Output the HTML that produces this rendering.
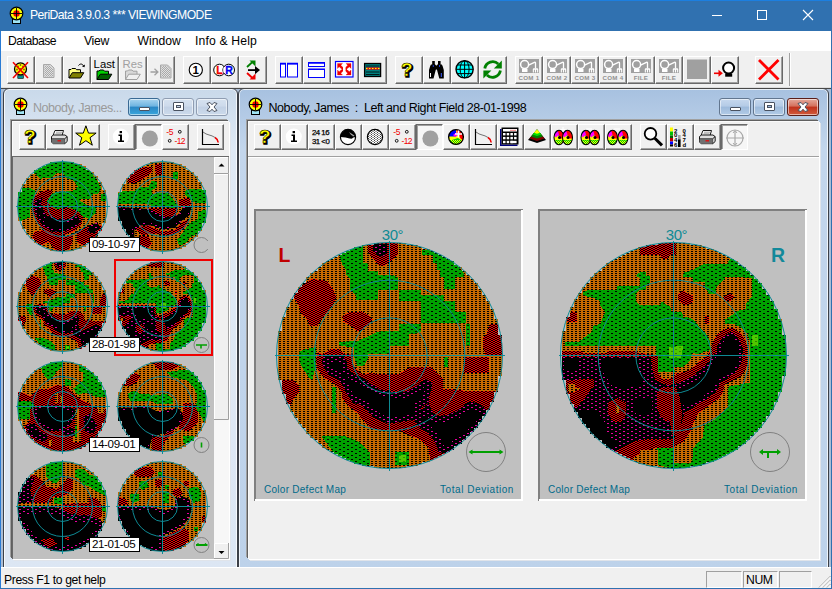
<!DOCTYPE html><html><head><meta charset="utf-8"><title>PeriData</title><style>
*{box-sizing:border-box;margin:0;padding:0}
html,body{width:832px;height:589px;overflow:hidden;background:#f0f0f0}
body{font-family:"Liberation Sans",sans-serif;font-size:12px;color:#000;position:relative}
.abs{position:absolute}
#title{left:0;top:0;width:832px;height:31px;background:#3071b0;border-top:1px solid #1c7fe0}
#title .txt{left:30px;top:7px;color:#fff;font-size:12.2px;white-space:nowrap;letter-spacing:-0.53px}
#menu{left:1px;top:31px;width:830px;height:20px;background:#fff}
#menu span{position:absolute;top:3px;font-size:12.2px;white-space:nowrap}
#tb{left:1px;top:51px;width:830px;height:36px;background:#f0f0f0}
#tbline1{left:1px;top:86px;width:830px;height:2px;background:linear-gradient(#fafafa,#d4d4d4)}
#tbline2{left:1px;top:88px;width:830px;height:1px;background:#484848}
#mdi{left:1px;top:89px;width:830px;height:478px;background:#abbdd4;overflow:hidden}
#status{left:1px;top:567px;width:830px;height:21px;background:#f0f0f0;border-top:1px solid #fff}
#bl{left:0;top:31px;width:1px;height:558px;background:#2a7bd4}
#br{left:831px;top:31px;width:1px;height:558px;background:#3071b0}
#bb{left:0;top:588px;width:832px;height:1px;background:#3071b0}
.btn{position:absolute;background:#f0f0f0;border-top:1px solid #fff;border-left:1px solid #fff;border-right:1px solid #696969;border-bottom:1px solid #696969;box-shadow:inset -1px -1px 0 #a0a0a0}
.btn svg{position:absolute;left:-1px;top:-1px;overflow:visible}
.btn.dn{border-top:1px solid #696969;border-left:1px solid #696969;border-right:1px solid #fff;border-bottom:1px solid #fff;background:#f6f6f6;box-shadow:inset 1px 1px 0 #a0a0a0}
.win{position:absolute;border:1px solid #3c4048;border-radius:6px 6px 0 0;overflow:hidden;box-shadow:inset 0 0 0 1px rgba(255,255,255,.75)}
.win .cap{position:absolute;left:0;top:0;right:0;height:31px}
.sp{position:absolute;height:17px;top:3px;border-top:1px solid #a0a0a0;border-left:1px solid #a0a0a0;border-right:1px solid #fff;border-bottom:1px solid #fff}
</style></head><body><svg width="0" height="0" style="position:absolute"><defs>
<pattern id="pO" patternTransform="translate(1,1)" width="4" height="2" patternUnits="userSpaceOnUse"><rect width="4" height="2" fill="#c56a00"/><rect x="2" y="0" width="2" height="1" fill="#000"/></pattern>
<pattern id="pG" patternTransform="translate(1,1)" width="8" height="4" patternUnits="userSpaceOnUse"><rect width="8" height="4" fill="#00a000"/><rect x="2" y="0" width="2" height="1" fill="#000"/><rect x="6" y="2" width="2" height="1" fill="#000"/></pattern>
<pattern id="pR" patternTransform="translate(1,1)" width="4" height="2" patternUnits="userSpaceOnUse"><rect width="4" height="2" fill="#000"/><rect x="0" y="1" width="2" height="1" fill="#f00000"/><rect x="2" y="0" width="2" height="1" fill="#f00000"/></pattern>
<pattern id="pK" patternTransform="translate(1,1)" width="8" height="4" patternUnits="userSpaceOnUse"><rect width="8" height="4" fill="#000"/><rect x="2" y="0" width="2" height="1" fill="#e8009c"/><rect x="6" y="2" width="2" height="1" fill="#e8009c"/></pattern>
<pattern id="pY" patternTransform="translate(1,1)" width="8" height="4" patternUnits="userSpaceOnUse"><rect width="8" height="4" fill="#50c800"/><rect x="2" y="0" width="2" height="1" fill="#308000"/><rect x="6" y="2" width="2" height="1" fill="#308000"/></pattern>
<pattern id="pDoc" width="2" height="2" patternUnits="userSpaceOnUse"><rect width="2" height="2" fill="#e0e0e0"/><rect width="1" height="1" fill="#a8a8a8"/><rect x="1" y="1" width="1" height="1" fill="#a8a8a8"/></pattern><pattern id="pDot" width="2" height="2" patternUnits="userSpaceOnUse"><rect width="1" height="1" fill="#ffff00"/><rect x="1" y="1" width="1" height="1" fill="#ffff00"/></pattern><pattern id="pDit" width="3" height="2" patternUnits="userSpaceOnUse"><rect width="3" height="2" fill="#fff"/><rect width="1" height="1" fill="#404040"/><rect x="1.5" y="1" width="1" height="1" fill="#404040"/></pattern></defs></svg><div id="title" class="abs"><svg class="abs" style="left:8px;top:5px" width="18" height="20" viewBox="0 0 18 20"><rect x="4.500" y="13" width="8" height="4.500" fill="#a0e4f4" stroke="#000" stroke-width="1"/><circle cx="8.500" cy="7.500" r="6.300" fill="#ffff00" stroke="#000" stroke-width="1.200"/><circle cx="8.500" cy="7.500" r="3.200" fill="#f00000"/><path d="M8.500 2v11M3 7.500h11" stroke="#000" stroke-width="0.900"/></svg><div class="abs txt">PeriData 3.9.0.3 *** VIEWINGMODE</div><svg class="abs" style="left:694px;top:-1px" width="138" height="30"><path d="M18 15.500h10" stroke="#fff" stroke-width="1"/><rect x="63.500" y="10.500" width="9" height="9" fill="none" stroke="#fff"/><path d="M109 10l10 10M119 10l-10 10" stroke="#fff" stroke-width="1.100"/></svg></div><div id="menu" class="abs"><span style="left:7px;letter-spacing:-0.52px">Database</span><span style="left:83px;letter-spacing:-0.3px">View</span><span style="left:136.5px">Window</span><span style="left:194px;letter-spacing:0.15px">Info &amp; Help</span></div><div id="tb" class="abs"><div class="btn" style="left:6px;top:5px;width:28px;height:28px"><svg width="28" height="28"><g transform="translate(1,1)"><circle cx="12.5" cy="11.9" r="6" fill="#ffff00" stroke="#000" stroke-width="1.3"/><g fill="#806000"><circle cx="10" cy="9.5" r="0.9"/><circle cx="15" cy="9.5" r="0.9"/><circle cx="12.5" cy="8" r="0.9"/><circle cx="9" cy="12.5" r="0.9"/><circle cx="16" cy="12.5" r="0.9"/><circle cx="12.5" cy="12" r="0.9"/><circle cx="10.5" cy="15.3" r="0.9"/><circle cx="14.5" cy="15.3" r="0.9"/></g><rect x="9.8" y="18.6" width="5.6" height="2.8" fill="#009090" stroke="#000" stroke-width="0.6"/><path d="M5 5.3L20 21M20 5.3L5 21" stroke="#f00000" stroke-width="1.6"/></g></svg></div><div class="btn" style="left:34px;top:5px;width:28px;height:28px"><svg width="28" height="28"><g transform="translate(1,1)"><path d="M7.5 7.5h7l3.5 3.5v9.5h-10.5z" fill="#d8d8d8" stroke="#a8a8a8" stroke-width="1"/><path d="M8.5 8.5h5.5l3 3v8h-8.5z" fill="url(#pDoc)"/></g></svg></div><div class="btn" style="left:62px;top:5px;width:28px;height:28px"><svg width="28" height="28"><g transform="translate(1,1)"><path d="M5 21.0v-8.5h2l1-1h3.5l1 1.2h4v3" fill="#ffff80" stroke="#000" stroke-width="1"/><path d="M5 21.0l3.3-5.3h11.5l-3.3 5.3z" fill="#808000" stroke="#000" stroke-width="1"/><path d="M14.5 8.5c1.5-2 4-2 5 .5" fill="none" stroke="#000" stroke-width="1"/><path d="M18 9.5l2.5.8.5-2.8z" fill="#000"/></g></svg></div><div class="btn" style="left:90px;top:5px;width:28px;height:28px"><svg width="28" height="28"><g transform="translate(1,1)"><text x="1.6" y="10.8" font-size="11.3" font-family="Liberation Sans" fill="#000">Last</text><path d="M5 22.5v-8.5h2l1-1h3.5l1 1.2h4v3" fill="#00d000" stroke="#000" stroke-width="1"/><path d="M5 22.5l3.3-5.3h11.5l-3.3 5.3z" fill="#006000" stroke="#000" stroke-width="1"/></g></svg></div><div class="btn" style="left:118px;top:5px;width:28px;height:28px"><svg width="28" height="28"><g transform="translate(1,1)"><text x="2.5" y="10.8" font-size="11.3" font-family="Liberation Sans" fill="#a0a0a0">Res</text><path d="M5.5 22.5v-8.5h2l1-1h3.5l1 1.2h4v3" fill="#d8d8d8" stroke="#a0a0a0" stroke-width="1"/><path d="M5.5 22.5l3.3-5.3h11.5l-3.3 5.3z" fill="#f0f0f0" stroke="#a0a0a0" stroke-width="1"/></g></svg></div><div class="btn" style="left:146px;top:5px;width:28px;height:28px"><svg width="28" height="28"><g transform="translate(1,1)"><path d="M2.5 15h7M6.5 11.8l3.4 3.2-3.4 3.2" fill="none" stroke="#a0a0a0" stroke-width="1.3"/><path d="M12.5 8h7l3.5 3.5v9.5h-10.5z" fill="#d8d8d8" stroke="#a8a8a8" stroke-width="1"/><path d="M13.5 9h5.5l3 3v8h-8.5z" fill="url(#pDoc)"/></g></svg></div><div class="btn" style="left:182px;top:5px;width:28px;height:28px"><svg width="28" height="28"><g transform="translate(1,1)"><circle cx="11.8" cy="12.9" r="6.6" fill="#fff" stroke="#000" stroke-width="1.1"/><text x="11.8" y="17" font-size="11.5" font-weight="bold" text-anchor="middle" font-family="Liberation Sans" fill="#000">1</text></g></svg></div><div class="btn" style="left:210px;top:5px;width:28px;height:28px"><svg width="28" height="28"><g transform="translate(1,1)"><circle cx="7.5" cy="13" r="5.8" fill="#fff" stroke="#000" stroke-width="1"/><circle cx="16.7" cy="13" r="5.8" fill="#fff" stroke="#000" stroke-width="1"/><path d="M12.100 10.500v5" stroke="#fff" stroke-width="1.5"/><text x="7.4" y="16.8" font-size="10.5" font-weight="bold" text-anchor="middle" font-family="Liberation Sans" fill="#f00000" stroke="#f00000" stroke-width="0.3">L</text><text x="17" y="16.8" stroke="#0000f0" stroke-width="0.3" font-size="10.5" font-weight="bold" text-anchor="middle" font-family="Liberation Sans" fill="#0000f0">R</text></g></svg></div><div class="btn" style="left:238px;top:5px;width:28px;height:28px"><svg width="28" height="28"><g transform="translate(1,1)"><path d="M7 10l6-5.5" stroke="#008000" stroke-width="1.8"/><path d="M9.5 3.5h6v6z" fill="#008000"/><path d="M8 13.1h8" stroke="#000" stroke-width="1.8"/><path d="M15 9l5 4.1-5 4.1z" fill="#000"/><path d="M7 16l6 5.5" stroke="#f00000" stroke-width="1.8"/><path d="M9.5 22.5h6v-6z" fill="#f00000"/></g></svg></div><div class="btn" style="left:274px;top:5px;width:28px;height:28px"><svg width="28" height="28"><g transform="translate(1,1)"><rect x="4.5" y="7" width="5" height="13" fill="#fff" stroke="#0000ff"/><rect x="11.5" y="7" width="10" height="13" fill="#fff" stroke="#0000ff"/><path d="M4 6.5h6M11 6.5h11" stroke="#0000ff" stroke-width="1.4"/></g></svg></div><div class="btn" style="left:302px;top:5px;width:28px;height:28px"><svg width="28" height="28"><g transform="translate(1,1)"><rect x="4.5" y="6" width="16" height="3.5" fill="#fff" stroke="#0000ff"/><rect x="4.5" y="12.5" width="16" height="8" fill="#fff" stroke="#0000ff"/><path d="M4 5.8h17M4 12.2h17" stroke="#0000ff" stroke-width="1.4"/></g></svg></div><div class="btn" style="left:330px;top:5px;width:28px;height:28px"><svg width="28" height="28"><g transform="translate(1,1)"><rect x="3.500" y="4.500" width="17.500" height="15.500" fill="#fff" stroke="#0000ff" stroke-width="1.200"/><g fill="#f00000" stroke="#f00000" stroke-width="0.3"><path d="M5.500 6.500h5l-1.700 1.700 3 3-1.600 1.600-3-3-1.700 1.700z"/><path d="M19 6.500h-5l1.700 1.700-3 3 1.600 1.600 3-3 1.700 1.700z"/><path d="M5.500 18h5l-1.700-1.700 3-3-1.600-1.600-3 3-1.700-1.700z"/><path d="M19 18h-5l1.700-1.700-3-3 1.600-1.600 3 3 1.700-1.700z"/></g><path d="M6 12.250h3.500M18.500 12.250h-3.500" stroke="#fff" stroke-width="1.2"/><rect x="11" y="5.5" width="2.500" height="13.500" fill="#fff"/></g></svg></div><div class="btn" style="left:358px;top:5px;width:28px;height:28px"><svg width="28" height="28"><g transform="translate(1,1)"><rect x="4.600" y="6.500" width="16" height="13" fill="#008080" stroke="#000" stroke-width="1.300"/><path d="M6 15h13.500M6 17.500h13.500M6 9h13.500" stroke="#000" stroke-width="0.800"/><path d="M6 11.500h13.500" stroke="#f00000" stroke-width="2.200"/><path d="M6 11.500h13.500" stroke="#ffff00" stroke-width="1.200" stroke-dasharray="1.500 1.500"/></g></svg></div><div class="btn" style="left:394px;top:5px;width:28px;height:28px"><svg width="28" height="28"><g transform="translate(1,1)"><g transform="translate(0.5,0.5)"><text x="5.5" y="19.5" font-size="19" font-weight="bold" font-family="Liberation Sans" fill="#000" stroke="#000" stroke-width="1.6">?</text></g><text x="5" y="19" font-size="19" font-weight="bold" font-family="Liberation Sans" fill="#ffff00" stroke="#000" stroke-width="0.5">?</text></g></svg></div><div class="btn" style="left:422px;top:5px;width:28px;height:28px"><svg width="28" height="28"><g transform="translate(1,1)"><path d="M8.200 4h2.600v3l1.200 1.500v3.500l-2.500 9.500h-4.500v-8.500l1.200-4 .8-1.500h1.200z" fill="#000"/><path d="M16.600 4h-2.600v3l-1.200 1.500v3.500l2.500 9.500h4.500v-8.500l-1.200-4-.8-1.500h-1.200z" fill="#000"/><rect x="11" y="8.500" width="3" height="4" fill="#000"/><rect x="8.800" y="8" width="1" height="2" fill="#2040d0"/><rect x="15" y="8" width="1" height="2" fill="#2040d0"/><rect x="6" y="16" width="1" height="4" fill="#fff"/><rect x="16.800" y="16" width="1" height="4" fill="#4060ff"/></g></svg></div><div class="btn" style="left:450px;top:5px;width:28px;height:28px"><svg width="28" height="28"><g transform="translate(1,1)"><circle cx="12.600" cy="12.300" r="8.600" fill="#00ffff" stroke="#000" stroke-width="1.400"/><path d="M4 12.300h17.200M5.500 8h14.200M5.500 16.600h14.200M12.600 3.700v17.200" stroke="#000" stroke-width="1"/><ellipse cx="12.600" cy="12.300" rx="4.500" ry="8.600" fill="none" stroke="#000" stroke-width="1"/></g></svg></div><div class="btn" style="left:478px;top:5px;width:28px;height:28px"><svg width="28" height="28"><g transform="translate(1,1)"><path d="M4.800 11.500a8 8 0 0 1 13.500-4.500" fill="none" stroke="#008000" stroke-width="2.800"/><path d="M21.800 3.500v8h-8z" fill="#008000"/><path d="M20.400 13.500a8 8 0 0 1-13.500 4.500" fill="none" stroke="#008000" stroke-width="2.800"/><path d="M3.400 21.500v-8h8z" fill="#008000"/></g></svg></div><div class="btn" style="left:514px;top:5px;width:28px;height:28px"><svg width="28" height="28"><g transform="translate(1,1)"><rect x="3" y="2" width="20" height="14" fill="#a0a0a0"/><circle cx="8.6" cy="7.6" r="4" fill="#a0a0a0" stroke="#fff" stroke-width="1.5"/><path d="M6 12h5.5v3h-5.5z" fill="#fff"/><path d="M12.6 8.2L18.4 5.3q1.1-.4 1.100.800V11.500" fill="none" stroke="#fff" stroke-width="1.300"/><path d="M16.800 15.600v-3.300q0-1 1-1h3.400q1 0 1 1v3.300h-1.100v-2.800h-1v2.800h-1.200v-2.800h-1v2.800z" fill="#fff"/><text x="13" y="23.3" font-size="6.2" font-weight="bold" text-anchor="middle" font-family="Liberation Sans" fill="#909090" letter-spacing="0.3">COM 1</text></g></svg></div><div class="btn" style="left:542px;top:5px;width:28px;height:28px"><svg width="28" height="28"><g transform="translate(1,1)"><rect x="3" y="2" width="20" height="14" fill="#a0a0a0"/><circle cx="8.6" cy="7.6" r="4" fill="#a0a0a0" stroke="#fff" stroke-width="1.5"/><path d="M6 12h5.5v3h-5.5z" fill="#fff"/><path d="M12.6 8.2L18.4 5.3q1.1-.4 1.100.800V11.500" fill="none" stroke="#fff" stroke-width="1.300"/><path d="M16.800 15.600v-3.300q0-1 1-1h3.400q1 0 1 1v3.300h-1.100v-2.800h-1v2.800h-1.200v-2.800h-1v2.800z" fill="#fff"/><text x="13" y="23.3" font-size="6.2" font-weight="bold" text-anchor="middle" font-family="Liberation Sans" fill="#909090" letter-spacing="0.3">COM 2</text></g></svg></div><div class="btn" style="left:570px;top:5px;width:28px;height:28px"><svg width="28" height="28"><g transform="translate(1,1)"><rect x="3" y="2" width="20" height="14" fill="#a0a0a0"/><circle cx="8.6" cy="7.6" r="4" fill="#a0a0a0" stroke="#fff" stroke-width="1.5"/><path d="M6 12h5.5v3h-5.5z" fill="#fff"/><path d="M12.6 8.2L18.4 5.3q1.1-.4 1.100.800V11.500" fill="none" stroke="#fff" stroke-width="1.300"/><path d="M16.800 15.600v-3.300q0-1 1-1h3.400q1 0 1 1v3.300h-1.100v-2.800h-1v2.800h-1.200v-2.800h-1v2.800z" fill="#fff"/><text x="13" y="23.3" font-size="6.2" font-weight="bold" text-anchor="middle" font-family="Liberation Sans" fill="#909090" letter-spacing="0.3">COM 3</text></g></svg></div><div class="btn" style="left:598px;top:5px;width:28px;height:28px"><svg width="28" height="28"><g transform="translate(1,1)"><rect x="3" y="2" width="20" height="14" fill="#a0a0a0"/><circle cx="8.6" cy="7.6" r="4" fill="#a0a0a0" stroke="#fff" stroke-width="1.5"/><path d="M6 12h5.5v3h-5.5z" fill="#fff"/><path d="M12.6 8.2L18.4 5.3q1.1-.4 1.100.800V11.500" fill="none" stroke="#fff" stroke-width="1.300"/><path d="M16.800 15.600v-3.300q0-1 1-1h3.400q1 0 1 1v3.300h-1.100v-2.800h-1v2.800h-1.200v-2.800h-1v2.800z" fill="#fff"/><text x="13" y="23.3" font-size="6.2" font-weight="bold" text-anchor="middle" font-family="Liberation Sans" fill="#909090" letter-spacing="0.3">COM 4</text></g></svg></div><div class="btn" style="left:626px;top:5px;width:28px;height:28px"><svg width="28" height="28"><g transform="translate(1,1)"><rect x="3" y="2" width="20" height="14" fill="#a0a0a0"/><circle cx="8.6" cy="7.6" r="4" fill="#a0a0a0" stroke="#fff" stroke-width="1.5"/><path d="M6 12h5.5v3h-5.5z" fill="#fff"/><path d="M12.6 8.2L18.4 5.3q1.1-.4 1.100.800V11.500" fill="none" stroke="#fff" stroke-width="1.300"/><path d="M16.800 15.600v-3.300q0-1 1-1h3.400q1 0 1 1v3.300h-1.100v-2.800h-1v2.800h-1.200v-2.800h-1v2.800z" fill="#fff"/><text x="13" y="23.3" font-size="6.2" font-weight="bold" text-anchor="middle" font-family="Liberation Sans" fill="#909090" letter-spacing="0.3">FILE</text></g></svg></div><div class="btn" style="left:654px;top:5px;width:28px;height:28px"><svg width="28" height="28"><g transform="translate(1,1)"><rect x="3" y="2" width="20" height="14" fill="#a0a0a0"/><circle cx="8.6" cy="7.6" r="4" fill="#a0a0a0" stroke="#fff" stroke-width="1.5"/><path d="M6 12h5.5v3h-5.5z" fill="#fff"/><path d="M12.6 8.2L18.4 5.3q1.1-.4 1.100.800V11.500" fill="none" stroke="#fff" stroke-width="1.300"/><path d="M16.800 15.600v-3.300q0-1 1-1h3.400q1 0 1 1v3.300h-1.100v-2.800h-1v2.800h-1.200v-2.800h-1v2.800z" fill="#fff"/><text x="13" y="23.3" font-size="6.2" font-weight="bold" text-anchor="middle" font-family="Liberation Sans" fill="#909090" letter-spacing="0.3">FILE</text></g></svg></div><div class="btn" style="left:682px;top:5px;width:28px;height:28px"><svg width="28" height="28"><g transform="translate(1,1)"><rect x="3" y="2.500" width="20" height="19.500" fill="#a0a0a0"/></g></svg></div><div class="btn" style="left:710px;top:5px;width:28px;height:28px"><svg width="28" height="28"><g transform="translate(1,1)"><circle cx="16.600" cy="11" r="5.500" fill="#fff" stroke="#000" stroke-width="2"/><rect x="13.200" y="16.500" width="7" height="3.200" fill="#000"/><path d="M2 16.300h6" stroke="#f00000" stroke-width="1.600"/><path d="M6.500 12.800l4.300 3.500-4.300 3.500z" fill="#f00000"/></g></svg></div><div class="btn" style="left:754px;top:5px;width:28px;height:28px"><svg width="28" height="28"><g transform="translate(1,1)"><path d="M3 3l19.500 19.500M22.500 3L3 22.500" stroke="#ff0000" stroke-width="2.800"/></g></svg></div><div class="abs" style="left:788px;top:2px;width:1px;height:34px;background:#a0a0a0"></div><div class="abs" style="left:789px;top:2px;width:1px;height:34px;background:#fff"></div></div><div id="tbline1" class="abs"></div><div id="tbline2" class="abs"></div><div id="mdi" class="abs"><div class="win" style="left:2px;top:-1px;width:235px;height:490px;background:linear-gradient(#c9d9ea,#dfe9f5 60px,#dce6f3)"><div class="cap"><svg class="abs" style="left:8px;top:8px" width="18" height="20" viewBox="0 0 18 20"><rect x="4.500" y="13" width="8" height="4.500" fill="#a0e4f4" stroke="#000" stroke-width="1"/><circle cx="8.500" cy="7.500" r="6.300" fill="#ffff00" stroke="#000" stroke-width="1.200"/><circle cx="8.500" cy="7.500" r="3.200" fill="#f00000"/><path d="M8.500 2v11M3 7.500h11" stroke="#000" stroke-width="0.900"/></svg><div class="abs" style="left:29px;top:12px;color:#9a9a9a;font-size:12.5px;white-space:nowrap;letter-spacing:-0.48px">Nobody, James...</div><div class="abs" style="left:124px;top:9px;width:32px;height:18px;border:1px solid #3a6a94;border-radius:3px;background:linear-gradient(#a8d4f0,#6eb4e0 45%,#2a86c4 50%,#3aa6dc);box-shadow:inset 0 0 0 1px rgba(255,255,255,.55)"><div class="abs" style="left:10px;top:8px;width:11px;height:4px;background:#fff;border:1px solid #4a5260;border-radius:1px"></div></div><div class="abs" style="left:158px;top:9px;width:32px;height:18px;border:1px solid #8f9db2;border-radius:3px;background:linear-gradient(#d6e2f0,#cddaeb 45%,#c2d1e5 50%,#ccdaeb);box-shadow:inset 0 0 0 1px rgba(255,255,255,.55)"><div class="abs" style="left:10px;top:3px;width:11px;height:9px;border:1px solid #4a5260;border-radius:1px;background:#fff"><div class="abs" style="left:2px;top:2px;width:5px;height:3px;border:1px solid #4a5260;background:linear-gradient(#d6e2f0,#cddaeb 45%,#c2d1e5 50%,#ccdaeb)"></div></div></div><div class="abs" style="left:192px;top:9px;width:32px;height:18px;border:1px solid #8f9db2;border-radius:3px;background:linear-gradient(#d6e2f0,#cddaeb 45%,#c2d1e5 50%,#ccdaeb);box-shadow:inset 0 0 0 1px rgba(255,255,255,.55)"><svg class="abs" style="left:8px;top:2px" width="14" height="12"><path d="M2 2.500l3-1 2 2.300 2-2.300 3 1-3 3.500 3 3.500-3 1-2-2.300-2 2.300-3-1 3-3.500z" fill="#fff" stroke="#4a5260" stroke-width="1"/></svg></div></div><div class="abs" style="left:8px;top:32px;width:217px;height:438px;background:#f0f0f0;box-shadow:-1px -1px 0 0 #606060,-2px -2px 0 0 #a0a0a0,1px 1px 0 0 #fff,2px 2px 0 0 #e0e4ea,inset 1px 1px 0 #fafafa"><div class="btn" style="left:7px;top:3px;width:27px;height:26px"><svg width="27" height="26"><g transform="translate(0.5,0.5)"><text x="5.5" y="19.5" font-size="19" font-weight="bold" font-family="Liberation Sans" fill="#000" stroke="#000" stroke-width="1.6">?</text></g><text x="5" y="19" font-size="19" font-weight="bold" font-family="Liberation Sans" fill="#ffff00" stroke="#000" stroke-width="0.5">?</text></svg></div><div class="btn" style="left:34px;top:3px;width:27px;height:26px"><svg width="27" height="26"><path d="M9 6.5h8.5l-1.5 5h-9z" fill="#fff" stroke="#000" stroke-width="0.9"/><path d="M10 8.2h6M9.5 9.8h6" stroke="#808080" stroke-width="0.7"/><path d="M5.5 12.5l2-1.5h11.5l2 1.5v5l-2.5 2.2h-11l-2-1.5z" fill="#e0e0e0" stroke="#000" stroke-width="0.9"/><path d="M5.5 15.2h13v4.5h-11l-2-1.5z" fill="#707070"/><path d="M5.5 14.8h13.2l2.3-2" fill="none" stroke="#000" stroke-width="0.8"/><rect x="11.5" y="16.2" width="3.5" height="1.2" fill="#f00000"/><path d="M18.7 15v4.5l2.3-2v-4.8z" fill="#e0e0e0" stroke="#000" stroke-width="0.6"/></svg></div><div class="btn" style="left:61px;top:3px;width:27px;height:26px"><svg width="27" height="26"><path d="M12.900 1.800l2.600 7.300h7.600l-6.100 4.600 2.300 7.500-6.400-4.500-6.400 4.500 2.300-7.500-6.100-4.600h7.600z" fill="#ffff00" stroke="#000" stroke-width="1"/></svg></div><div class="btn" style="left:96px;top:3px;width:27px;height:26px"><svg width="27" height="26"><circle cx="12.8" cy="12.6" r="8" fill="#fff"/><path d="M10.5 10.5h3.5v6h2v1.6h-6v-1.6h2v-4.4h-1.5z" fill="#000"/><rect x="11.6" y="7" width="2.4" height="2.2" fill="#000"/></svg></div><div class="btn dn" style="left:123px;top:3px;width:27px;height:26px"><svg width="27" height="26"><circle cx="14.9" cy="14.5" r="8" fill="#a0a0a0"/></svg></div><div class="btn" style="left:150px;top:3px;width:27px;height:26px"><svg width="27" height="26"><text x="4.3" y="11" font-size="8.5" font-family="Liberation Sans" fill="#f00000" letter-spacing="-0.4">-5</text><text x="12.6" y="20" font-size="8.5" font-family="Liberation Sans" fill="#f00000" letter-spacing="-0.7">-12</text><circle cx="17.8" cy="7.8" r="1.4" fill="none" stroke="#000" stroke-width="0.9"/><circle cx="7.7" cy="16.8" r="1.4" fill="none" stroke="#000" stroke-width="0.9"/></svg></div><div class="btn" style="left:185px;top:3px;width:27px;height:26px"><svg width="27" height="26"><path d="M5.5 5v15.5H22" fill="none" stroke="#000" stroke-width="1.2"/><path d="M6 8c4 3.500 8 2.500 12 5.500" fill="none" stroke="#505050" stroke-width="0.800"/><path d="M18 13.5c2 1.2 3 3 3.2 5" fill="none" stroke="#f00000" stroke-width="1.6"/></svg></div><svg class="abs" style="left:0;top:0" width="217" height="438" viewBox="12 121 217 438"><rect x="12" y="156" width="217" height="403" fill="#c0c0c0"/><path d="M12.5 559V156.5H229" fill="none" stroke="#696969" shape-rendering="crispEdges"/><clipPath id="c1"><rect x="18" y="192" width="4" height="29"/><rect x="22" y="184" width="4" height="45"/><rect x="26" y="178" width="4" height="57"/><rect x="30" y="174" width="4" height="65"/><rect x="34" y="170" width="4" height="73"/><rect x="38" y="168" width="4" height="77"/><rect x="42" y="166" width="4" height="81"/><rect x="46" y="164" width="4" height="85"/><rect x="50" y="162" width="4" height="89"/><rect x="54" y="162" width="4" height="89"/><rect x="58" y="162" width="4" height="89"/><rect x="62" y="162" width="4" height="89"/><rect x="66" y="162" width="4" height="89"/><rect x="70" y="162" width="4" height="89"/><rect x="74" y="164" width="4" height="85"/><rect x="78" y="164" width="4" height="85"/><rect x="82" y="166" width="4" height="81"/><rect x="86" y="170" width="4" height="73"/><rect x="90" y="172" width="4" height="69"/><rect x="94" y="176" width="4" height="61"/><rect x="98" y="182" width="4" height="49"/><rect x="102" y="190" width="4" height="33"/></clipPath><g clip-path="url(#c1)" shape-rendering="crispEdges"><rect x="15.899999999999999" y="159.9" width="93.2" height="93.2" fill="url(#pO)"/><polygon points="42.5,162.3 61.9,160.2 78.2,163.3 89.4,170.4 97.5,180.6 101.6,188.8 97.5,193.9 93.5,193.9 89.4,199 78.2,199 73.1,190.8 78.2,186.7 73.1,180.6 67,178.6 61.9,172.5 56.8,172.5 51.7,177.6 40.5,178.6 35.4,173.5 28.3,173.5 34.4,167.4" fill="url(#pG)" /><polygon points="16,187.8 30.3,187.8 35.4,190.8 34.4,202 30.3,209.1 30.3,217.3 20.1,221.4 14,205.1" fill="url(#pG)" /><polygon points="51.7,192.8 73.1,190.8 78.2,199 83.3,203 89.4,207.1 95.5,206.1 95.5,213.2 89.4,219.3 85.3,217.3 83.3,217.3 78.2,211.2 73.1,209.1 67,207.1 56.8,209.1 51.7,207.1 46.6,201" fill="url(#pG)" /><polygon points="100.6,193.9 108.8,193.9 108.8,201 100.6,201" fill="url(#pG)" /><polygon points="34.4,195.9 42.5,190.8 51.7,189.8 51.7,193.9 46.6,201 51.7,207.1 56.8,209.1 67,207.1 78.2,211.2 83.3,217.3 81.2,225.4 73.1,231.6 62.9,235.6 51.7,235.6 42.5,229.5 36.4,221.4 32.3,211.2 32.3,201" fill="url(#pR)" /><polygon points="34.4,231.6 46.6,229.5 56.8,235.6 69,235.6 77.2,231.6 89.4,225.4 97.5,223.4 103.7,227.5 93.5,241.7 83.3,245.8 73.1,239.7 69,249.9 56.8,251.9 48.6,241.7 40.5,245.8 32.3,237.7" fill="url(#pR)" /><polygon points="35.4,200 42.5,196.9 40.5,205.1 46.6,215.3 56.8,219.3 69,219.3 77.2,215.3 81.2,221.4 75.1,227.5 62.9,231.6 51.7,231.6 42.5,225.4 36.4,215.3 34.4,207.1" fill="#000" /><clipPath id="c1k1"><polygon points="35.4,200 42.5,196.9 40.5,205.1 46.6,215.3 56.8,219.3 69,219.3 77.2,215.3 81.2,221.4 75.1,227.5 62.9,231.6 51.7,231.6 42.5,225.4 36.4,215.3 34.4,207.1" fill="#000" /></clipPath><g clip-path="url(#c1k1)"><polygon points="35.4,200 42.5,196.9 40.5,205.1 46.6,215.3 56.8,219.3 69,219.3 77.2,215.3 81.2,221.4 75.1,227.5 62.9,231.6 51.7,231.6 42.5,225.4 36.4,215.3 34.4,207.1" fill="none" stroke="url(#pK)" stroke-width="6"/></g><polygon points="89.4,225.4 97.5,222.4 99.6,227.5 93.5,233.6 87.4,231.6" fill="#000" /><clipPath id="c1k2"><polygon points="89.4,225.4 97.5,222.4 99.6,227.5 93.5,233.6 87.4,231.6" fill="#000" /></clipPath><g clip-path="url(#c1k2)"><polygon points="89.4,225.4 97.5,222.4 99.6,227.5 93.5,233.6 87.4,231.6" fill="none" stroke="url(#pK)" stroke-width="6"/></g><polygon points="73.1,233.6 77.2,233.6 77.2,241.7 73.1,241.7" fill="url(#pO)" /></g><g fill="none" stroke="#0e8a94" stroke-width="1"><circle cx="62.5" cy="206.5" r="15.0"/><circle cx="62.5" cy="206.5" r="30.0"/><circle cx="62.5" cy="206.5" r="45.0"/><path d="M15.5 206.5H109.5M62.5 159.5V253.5" shape-rendering="crispEdges"/></g><clipPath id="c2"><rect x="118" y="192" width="4" height="29"/><rect x="122" y="184" width="4" height="45"/><rect x="126" y="178" width="4" height="57"/><rect x="130" y="174" width="4" height="65"/><rect x="134" y="170" width="4" height="73"/><rect x="138" y="168" width="4" height="77"/><rect x="142" y="166" width="4" height="81"/><rect x="146" y="164" width="4" height="85"/><rect x="150" y="162" width="4" height="89"/><rect x="154" y="162" width="4" height="89"/><rect x="158" y="162" width="4" height="89"/><rect x="162" y="162" width="4" height="89"/><rect x="166" y="162" width="4" height="89"/><rect x="170" y="162" width="4" height="89"/><rect x="174" y="164" width="4" height="85"/><rect x="178" y="164" width="4" height="85"/><rect x="182" y="166" width="4" height="81"/><rect x="186" y="170" width="4" height="73"/><rect x="190" y="172" width="4" height="69"/><rect x="194" y="176" width="4" height="61"/><rect x="198" y="182" width="4" height="49"/><rect x="202" y="190" width="4" height="33"/></clipPath><g clip-path="url(#c2)" shape-rendering="crispEdges"><rect x="115.9" y="159.9" width="93.2" height="93.2" fill="url(#pO)"/><polygon points="116,193.9 124.2,190.8 134.4,190.8 140.5,186.7 148.6,186.7 151.7,180.6 156.8,180.6 156.8,186.7 151.7,190.8 151.7,193.9 167,192.8 173.1,199 177.2,205.1 175.1,211.2 169,209.1 162.9,206.1 151.7,206.1 148.6,204.1 116,204.1" fill="url(#pG)" /><polygon points="173.1,171.5 178.2,171.5 178.2,178.6 173.1,178.6" fill="url(#pG)" /><polygon points="185.3,190.8 191.4,188.8 209.8,189.8 209.8,203 195.5,203 189.4,199 185.3,194.9" fill="url(#pG)" /><polygon points="197.5,211.2 209.8,209.1 207.7,223.4 197.5,233.6 189.4,237.7 185.3,243.8 179.2,245.8 177.2,239.7 183.3,231.6 189.4,223.4 197.5,219.3" fill="url(#pG)" /><polygon points="126.2,176.5 134.4,170.4 142.5,167.4 151.7,166.4 151.7,171.5 146.6,176.5 140.5,180.6 134.4,183.7 128.3,182.7" fill="url(#pR)" /><polygon points="154.8,164.3 161.9,163.3 161.9,174.5 156.8,175.5 154.8,170.4" fill="url(#pR)" /><polygon points="179.2,199 189.4,197.9 191.4,205.1 185.3,207.1 179.2,206.1" fill="url(#pR)" /><polygon points="134.4,227.5 148.6,225.4 162.9,231.6 175.1,229.5 183.3,221.4 189.4,219.3 185.3,227.5 177.2,233.6 167,235.6 151.7,233.6 142.5,235.6 138.5,231.6" fill="url(#pR)" /><polygon points="138.5,235.6 148.6,235.6 151.7,243.8 146.6,249.9 138.5,245.8" fill="url(#pR)" /><polygon points="148.6,207.7 177.2,207.7 178.2,211.2 175.1,215.7 169,218.9 162.9,218.9 156.8,215.7 148.6,212.2" fill="url(#pR)" /><polygon points="114,207.1 134.4,208.1 148.6,209.1 156.8,213.2 167,217.3 177.2,215.3 181.2,211.2 183.3,206.1 191.4,206.1 189.4,215.3 183.3,219.3 175.1,227.5 162.9,229.5 151.7,225.4 140.5,225.4 134.4,229.5 134.4,239.7 124.2,233.6 116,219.3" fill="#000" /><clipPath id="c2k1"><polygon points="114,207.1 134.4,208.1 148.6,209.1 156.8,213.2 167,217.3 177.2,215.3 181.2,211.2 183.3,206.1 191.4,206.1 189.4,215.3 183.3,219.3 175.1,227.5 162.9,229.5 151.7,225.4 140.5,225.4 134.4,229.5 134.4,239.7 124.2,233.6 116,219.3" fill="#000" /></clipPath><g clip-path="url(#c2k1)"><polygon points="114,207.1 134.4,208.1 148.6,209.1 156.8,213.2 167,217.3 177.2,215.3 181.2,211.2 183.3,206.1 191.4,206.1 189.4,215.3 183.3,219.3 175.1,227.5 162.9,229.5 151.7,225.4 140.5,225.4 134.4,229.5 134.4,239.7 124.2,233.6 116,219.3" fill="none" stroke="url(#pK)" stroke-width="4"/></g></g><g fill="none" stroke="#0e8a94" stroke-width="1"><circle cx="162.5" cy="206.5" r="15.0"/><circle cx="162.5" cy="206.5" r="30.0"/><circle cx="162.5" cy="206.5" r="45.0"/><path d="M115.5 206.5H209.5M162.5 159.5V253.5" shape-rendering="crispEdges"/></g><clipPath id="c3"><rect x="18" y="292" width="4" height="29"/><rect x="22" y="284" width="4" height="45"/><rect x="26" y="278" width="4" height="57"/><rect x="30" y="274" width="4" height="65"/><rect x="34" y="270" width="4" height="73"/><rect x="38" y="268" width="4" height="77"/><rect x="42" y="266" width="4" height="81"/><rect x="46" y="264" width="4" height="85"/><rect x="50" y="262" width="4" height="89"/><rect x="54" y="262" width="4" height="89"/><rect x="58" y="262" width="4" height="89"/><rect x="62" y="262" width="4" height="89"/><rect x="66" y="262" width="4" height="89"/><rect x="70" y="262" width="4" height="89"/><rect x="74" y="264" width="4" height="85"/><rect x="78" y="264" width="4" height="85"/><rect x="82" y="266" width="4" height="81"/><rect x="86" y="270" width="4" height="73"/><rect x="90" y="272" width="4" height="69"/><rect x="94" y="276" width="4" height="61"/><rect x="98" y="282" width="4" height="49"/><rect x="102" y="290" width="4" height="33"/></clipPath><g clip-path="url(#c3)" shape-rendering="crispEdges"><rect x="15.899999999999999" y="259.9" width="93.2" height="93.2" fill="url(#pO)"/><polygon points="42.9,265 47.4,263.4 51.8,262.1 51.8,269.5 53.9,269.5 53.9,272.7 57.9,272.7 57.9,274.3 63.5,274.3 66,275.6 66,280.4 61.9,280.4 57.9,280.4 57.9,284.5 49,284.5 49,282.4 46.9,280.4 46.9,276 45.3,274.3 45.3,272.7 43.7,270.3 42.9,267.8" fill="url(#pG)" /><polygon points="75.3,264.6 79.3,264.6 83,265.4 87.9,268.6 92.3,273.9 92.3,275.1 88.7,275.1 88.7,280 84.2,280 84.2,275.1 82.6,275.1 82.6,272.3 81.4,272.3 81.4,269.5 79.7,269.5 79.7,266.6 75.3,266.6" fill="url(#pG)" /><polygon points="66.4,280.4 74.9,280.4 74.9,282.4 84.2,282.4 84.2,284.9 88.7,284.9 88.7,289.3 93.1,289.3 93.1,293.4 74.9,293.4 74.9,284.9 66.4,284.9" fill="url(#pG)" /><polygon points="93.1,293.8 94.4,293.8 94.4,302.7 93.1,302.7" fill="url(#pG)" /><polygon points="42.5,301.1 49.8,300.7 54.7,298.7 57.9,297.1 62.6,296.6 66.4,296.6 66.4,293.8 74.9,293.8 74.9,297.1 72.5,297.9 70.4,297.9 70.4,302.7 62.5,302.7 62.6,306 53.9,305.9 53.9,307.5 52.2,310.8 49.8,310.8 48.6,307.5 48.2,303.1 42.5,302.7" fill="url(#pG)" /><polygon points="27.9,304.3 33.2,303.1 33.2,306.7 33.2,310.8 31.9,315.7 30.7,315.7 27.9,311.6 26.3,308.3 26.3,305.1" fill="url(#pG)" /><polygon points="39.6,318.9 41.3,318.9 41.3,329.4 39.6,329.4" fill="url(#pG)" /><polygon points="35.2,338.4 44.1,338.4 48.6,340 51.4,341.6 54.7,344.8 54.7,350.1 51.4,350.5 42.5,348.1" fill="url(#pG)" /><polygon points="84.2,307.1 85.8,307.1 85.8,311.2 84.2,311.2" fill="url(#pG)" /><polygon points="64.7,344.8 70.4,344.8 70.4,350.1 64.7,350.1" fill="url(#pG)" /><polygon points="66.4,346.1 69.2,346.1 69.2,348.9 66.4,348.9" fill="url(#pY)" /><polygon points="31.5,276 37.6,276.8 40,280 41.3,283.2 40,286.5 38,288.9 36,291.4 33.9,294.6 31.1,295 29.1,291.4 27.1,289.7 26.3,286.5 24.6,284.1 23.8,282 27.9,278.4" fill="url(#pR)" /><polygon points="46.1,289.3 51.4,288.9 53.9,290.1 55.9,292.2 53.9,294.6 51.4,296.6 49.4,296.6 46.9,294.6 44.1,293 43.7,291" fill="url(#pR)" /><polygon points="53.9,261.3 66,261.3 66,266.2 64.3,267.8 62.5,269.5 59.9,271.1 57.9,270.3 55.9,267.8 53.9,265.4" fill="url(#pR)" /><polygon points="102.5,293.8 105.7,293.8 106.9,297.1 108.6,306.7 108.6,306.7 100.8,306.7 99.6,302.7 99.6,299.5 101.2,297.9" fill="url(#pR)" /><polygon points="92.3,307.1 102.1,307.1 102.1,313.6 92.3,313.6" fill="url(#pR)" /><polygon points="19.4,316.1 24.2,316.1 26.3,318.1 26.3,321.3 24.2,323.8 23,326.6 20.6,326.6 18.1,321.3 18.1,316.1" fill="url(#pR)" /><polygon points="36,306 38.8,304 42.5,304 44.5,306 47.8,305.9 47.8,310 49.8,312.4 52.2,314 55.5,313.2 58.7,314 63.5,314 66,314 70.4,311.2 79.3,311.2 81.4,313.2 83.8,315.7 83.8,319.7 89.5,320.1 92.3,320.5 107.3,320.5 107.3,337.6 94.4,345.7 78.9,350.5 78.1,343.3 74.9,340 70.4,338.4 66,336.3 61.9,336.3 57.9,336.3 54.7,335.1 51.4,331.9 49.8,329.4 46.5,327 43.7,323.8 43.3,320.5 40.9,318.1 36.8,315.7 33.9,312.4 33.2,308.3 33.9,305.1" fill="url(#pR)" /><polygon points="36.4,306.7 43.3,306.3 45.3,308.3 45.7,311.6 48.2,314 52.2,315.7 55.5,318.1 58.7,320.1 63.5,320.9 66,321.3 70.4,320.5 74.1,318.1 76.9,315.7 79.3,317.3 79.3,319.7 78.1,322.9 78.1,325.4 74.9,327 74.9,329.4 73.3,331.9 66,333.1 61.9,333.5 59.5,332.7 56.3,331.1 53.9,328.6 51.4,326.2 48.2,325.4 45.7,322.2 43.7,318.1 41.7,315.7 38.4,314 36.4,311.6 35.6,309.2" fill="#000" /><clipPath id="c3k1"><polygon points="36.4,306.7 43.3,306.3 45.3,308.3 45.7,311.6 48.2,314 52.2,315.7 55.5,318.1 58.7,320.1 63.5,320.9 66,321.3 70.4,320.5 74.1,318.1 76.9,315.7 79.3,317.3 79.3,319.7 78.1,322.9 78.1,325.4 74.9,327 74.9,329.4 73.3,331.9 66,333.1 61.9,333.5 59.5,332.7 56.3,331.1 53.9,328.6 51.4,326.2 48.2,325.4 45.7,322.2 43.7,318.1 41.7,315.7 38.4,314 36.4,311.6 35.6,309.2" fill="#000" /></clipPath><g clip-path="url(#c3k1)"><polygon points="36.4,306.7 43.3,306.3 45.3,308.3 45.7,311.6 48.2,314 52.2,315.7 55.5,318.1 58.7,320.1 63.5,320.9 66,321.3 70.4,320.5 74.1,318.1 76.9,315.7 79.3,317.3 79.3,319.7 78.1,322.9 78.1,325.4 74.9,327 74.9,329.4 73.3,331.9 66,333.1 61.9,333.5 59.5,332.7 56.3,331.1 53.9,328.6 51.4,326.2 48.2,325.4 45.7,322.2 43.7,318.1 41.7,315.7 38.4,314 36.4,311.6 35.6,309.2" fill="none" stroke="url(#pK)" stroke-width="5.4"/></g><polygon points="94,325 97.6,325.4 100.8,327.8 104.1,329.4 94.4,339.2 85.4,345.7 82.2,344.8 80.6,340.8 78.1,337.6 74.1,334.7 72.5,332.3 74.9,328.6 78.1,325.4 79.3,328.6 81.4,330.7 85.4,330.3 89.5,328.6" fill="#000" /><clipPath id="c3k2"><polygon points="94,325 97.6,325.4 100.8,327.8 104.1,329.4 94.4,339.2 85.4,345.7 82.2,344.8 80.6,340.8 78.1,337.6 74.1,334.7 72.5,332.3 74.9,328.6 78.1,325.4 79.3,328.6 81.4,330.7 85.4,330.3 89.5,328.6" fill="#000" /></clipPath><g clip-path="url(#c3k2)"><polygon points="94,325 97.6,325.4 100.8,327.8 104.1,329.4 94.4,339.2 85.4,345.7 82.2,344.8 80.6,340.8 78.1,337.6 74.1,334.7 72.5,332.3 74.9,328.6 78.1,325.4 79.3,328.6 81.4,330.7 85.4,330.3 89.5,328.6" fill="none" stroke="url(#pK)" stroke-width="6.3"/></g><polygon points="56,262.1 61.5,262.1 61.5,265.8 59.9,267 57.9,266.6 56,264.6" fill="#000" /><clipPath id="c3k3"><polygon points="56,262.1 61.5,262.1 61.5,265.8 59.9,267 57.9,266.6 56,264.6" fill="#000" /></clipPath><g clip-path="url(#c3k3)"><polygon points="56,262.1 61.5,262.1 61.5,265.8 59.9,267 57.9,266.6 56,264.6" fill="none" stroke="url(#pK)" stroke-width="18.0"/></g></g><g fill="none" stroke="#0e8a94" stroke-width="1"><circle cx="62.5" cy="306.5" r="15.0"/><circle cx="62.5" cy="306.5" r="30.0"/><circle cx="62.5" cy="306.5" r="45.0"/><path d="M15.5 306.5H109.5M62.5 259.5V353.5" shape-rendering="crispEdges"/></g><clipPath id="c4"><rect x="118" y="292" width="4" height="29"/><rect x="122" y="284" width="4" height="45"/><rect x="126" y="278" width="4" height="57"/><rect x="130" y="274" width="4" height="65"/><rect x="134" y="270" width="4" height="73"/><rect x="138" y="268" width="4" height="77"/><rect x="142" y="266" width="4" height="81"/><rect x="146" y="264" width="4" height="85"/><rect x="150" y="262" width="4" height="89"/><rect x="154" y="262" width="4" height="89"/><rect x="158" y="262" width="4" height="89"/><rect x="162" y="262" width="4" height="89"/><rect x="166" y="262" width="4" height="89"/><rect x="170" y="262" width="4" height="89"/><rect x="174" y="264" width="4" height="85"/><rect x="178" y="264" width="4" height="85"/><rect x="182" y="266" width="4" height="81"/><rect x="186" y="270" width="4" height="73"/><rect x="190" y="272" width="4" height="69"/><rect x="194" y="276" width="4" height="61"/><rect x="198" y="282" width="4" height="49"/><rect x="202" y="290" width="4" height="33"/></clipPath><g clip-path="url(#c4)" shape-rendering="crispEdges"><rect x="115.9" y="259.9" width="93.2" height="93.2" fill="url(#pO)"/><polygon points="126.3,281.2 128.7,280.4 140,280.4 140,278.8 149,278.8 149,275.6 147.4,274.7 149.4,273.1 151.4,273.1 151.4,274.7 153,274.7 153,277.6 151.4,278.8 151.4,280.4 149,280.4 147.4,282 147.4,284.9 149,286.5 157.1,286.5 157.9,284.9 159.5,286.1 161.1,286.9 161.9,289.3 166,289.3 166.4,291 168.4,291.4 170.4,292.2 172.5,294.6 174.9,297.1 176.9,300.3 176.9,304.3 172.5,306 170,305.5 169.2,308.3 166.8,311 161.9,311.2 163.5,313.2 156.3,313.2 156.3,306.7 155.5,306.7 155.5,302.7 119.4,302.7 119.4,301.1 124.6,301.1 126.3,299.9 127.9,298.7 129.9,297.1 130.7,294.6 133.5,293.8 135.2,288.9 133.2,286.5 133.2,284.9 130.3,283.2 126.3,282.8" fill="url(#pG)" /><polygon points="166.4,273.5 170.4,272.3 174.9,269.9 183.8,269.9 185.4,267.4 194.4,273.5 202.5,284.1 207.3,297.9 212.2,306.7 212.2,305.1 212.2,329.4 194.4,353.8 162.5,355.4 162.5,349.3 169.6,349.3 170.4,345.7 170.4,343.3 174.1,339.2 174.9,334.3 179.3,331.9 181.4,329.4 184.2,327 184.2,318.9 193.1,317.3 193.1,305.1 193.1,306.7 193.1,301.1 191.9,297.9 189.5,295.4 186.2,293.8 183,293.8 183,292.2 186.2,290.1 188.7,288.5 191.5,288.1 191.5,285.7 193.6,283.2 193.6,275.6 183.4,275.1 181.4,277.6 179.3,279.6 179.3,282 176.9,282 174.9,279.6 174.9,277.2 170.4,277.2 170.4,275.1 166.4,275.1" fill="url(#pG)" /><polygon points="155.9,343.3 162.6,343.3 162.6,351.3 159.5,350.9 155.9,349.7" fill="url(#pG)" /><polygon points="160.7,303.1 166.4,302.7 165.6,307.5 161.9,307.5 160.7,307.5" fill="url(#pY)" /><polygon points="193.6,298.4 196,298.4 196,302.7 193.6,302.7" fill="url(#pY)" /><polygon points="149,263.4 151.8,261.7 163.5,260.9 163.5,266.6 161.1,266.6 159.9,268.2 157.9,267.8 157.1,266.6 149,266.6" fill="url(#pR)" /><polygon points="120.6,290.6 122.2,288.9 124.2,289.3 124.2,293 120.6,293.4 118.9,292.2" fill="url(#pR)" /><polygon points="164.3,282 166.4,280.4 168.4,282 170.4,282.4 170.4,284.9 168.4,286.5 166,286.1 164.3,284.1" fill="url(#pR)" /><polygon points="182.6,282.8 185,281.6 187.1,283.2 185,284.9 182.6,284.5" fill="url(#pR)" /><polygon points="174.9,290.6 176.5,290.6 176.5,293.8 174.9,293.8" fill="url(#pR)" /><polygon points="114.1,304.7 126.3,304.7 126.3,305.5 136,305.5 136,304.7 148.2,304.7 148.2,305.5 153.9,305.9 156.3,306.7 156.3,313.2 157.9,315.7 161.1,315.7 163.5,314 161.9,313.6 166,313.2 169.2,312 172.5,309.2 175.3,307.1 176.9,305.1 177.7,306.7 178.1,301.1 180.1,297.9 183,295.8 186.2,295.4 189.5,297.9 191.5,301.1 191.9,306.7 191.9,305.1 191.5,311.6 189.5,314.8 186.2,316.5 183,318.1 182.2,321.3 180.6,323.8 178.1,325.4 174.9,327.8 172.5,329.4 170.8,332.7 169.2,336.8 166.8,340.8 163.5,342.4 161.9,343.3 163.5,343.3 155.5,343.3 149,345.7 146.5,347.3 147.4,353.8 115.7,353.8 114.1,321.3" fill="url(#pR)" /><polygon points="114.9,307.1 153.4,307.1 154.3,313.2 155.5,316.5 159.5,318.1 161.9,318.1 165.1,317.3 170,314.8 174.1,311.6 177.3,308.3 178.9,305.1 179.3,306.7 180.1,301.9 182.6,298.7 185.4,297.1 187.9,299.1 189.9,302.7 190.3,306.7 189.9,305.1 189.5,310 187.1,313.2 183.8,315.7 181.4,317.3 179.3,321.3 174.9,324.2 170.4,327 166.8,329.4 166,332.7 164.3,337.6 161.9,340 163.5,339.6 153,339.6 148.2,340.4 142.5,342.8 139.2,344.8 136,353.8 114.9,353.8" fill="url(#pK)" /><polygon points="134.4,307.9 148.2,307.9 148.2,313.2 151.4,315.7 148.2,318.9 142.5,319.3 138.4,318.9 136,315.7 134.4,313.2" fill="#000" /><polygon points="118.9,307.9 124.6,307.9 124.6,312.4 118.9,312.4" fill="#000" /><polygon points="146.5,323.8 153.9,323.8 153.9,329.4 148.2,330.3 146.5,327.8" fill="#000" /><polygon points="123.8,328.6 131.9,328.6 134.4,331.9 136,337.6 140,341.6 136,345.7 123.8,337.6" fill="#000" /><polygon points="181,306.7 181.8,301.9 183.8,299.5 185.4,298.7 187.1,300.3 188.7,303.6 189.1,306.7 188.7,305.1 188.3,310 185.4,312.8 182.2,314.4 180.1,316.5 178.1,320.1 174.1,322.9 170,325.4 166.8,326.6 165.1,323.8 163.5,321.3 166,319.7 170,317.7 174.1,314.4 177.3,310.8 179.3,307.5 180.1,305.1" fill="#000" /><polygon points="119.4,316.5 130.7,315.7 130.7,318.9 128.7,321.3 126.3,324.6 124.2,327 120.6,327 117.3,321.3" fill="url(#pR)" /><polygon points="120.6,317.7 123.4,317.7 123.4,319.3 125.4,319.3 125.4,320.1 123.4,320.1 123.4,320.9 120.6,320.9" fill="url(#pO)" /><polygon points="136.4,325.4 140,323.3 143.7,325.4 143.7,330.3 141.7,333.1 138,332.7 136.4,329.4" fill="url(#pR)" /><polygon points="139.6,326.6 140.9,326.6 140.9,329.4 139.6,329.4" fill="url(#pO)" /><polygon points="155.9,321.3 157.9,319.3 163.5,318.9 165.1,323.8 166,329.4 165.1,337.6 161.9,339.2 161.1,332.7 159.5,332.7 157.1,330.3 155.9,327" fill="url(#pR)" /><polygon points="149,344.1 156.3,344.1 156.3,350.1 149,348.1" fill="url(#pO)" /></g><g fill="none" stroke="#0e8a94" stroke-width="1"><circle cx="162.5" cy="306.5" r="15.0"/><circle cx="162.5" cy="306.5" r="30.0"/><circle cx="162.5" cy="306.5" r="45.0"/><path d="M115.5 306.5H209.5M162.5 259.5V353.5" shape-rendering="crispEdges"/></g><clipPath id="c5"><rect x="18" y="392" width="4" height="29"/><rect x="22" y="384" width="4" height="45"/><rect x="26" y="378" width="4" height="57"/><rect x="30" y="374" width="4" height="65"/><rect x="34" y="370" width="4" height="73"/><rect x="38" y="368" width="4" height="77"/><rect x="42" y="366" width="4" height="81"/><rect x="46" y="364" width="4" height="85"/><rect x="50" y="362" width="4" height="89"/><rect x="54" y="362" width="4" height="89"/><rect x="58" y="362" width="4" height="89"/><rect x="62" y="362" width="4" height="89"/><rect x="66" y="362" width="4" height="89"/><rect x="70" y="362" width="4" height="89"/><rect x="74" y="364" width="4" height="85"/><rect x="78" y="364" width="4" height="85"/><rect x="82" y="366" width="4" height="81"/><rect x="86" y="370" width="4" height="73"/><rect x="90" y="372" width="4" height="69"/><rect x="94" y="376" width="4" height="61"/><rect x="98" y="382" width="4" height="49"/><rect x="102" y="390" width="4" height="33"/></clipPath><g clip-path="url(#c5)" shape-rendering="crispEdges"><rect x="15.899999999999999" y="359.9" width="93.2" height="93.2" fill="url(#pO)"/><polygon points="40.5,365.3 51.7,360.2 61.9,360.2 61.9,366.4 56.8,371.5 51.7,378.6 46.6,378.6 42.5,372.5" fill="url(#pG)" /><polygon points="79.2,364.3 89.4,369.4 99.6,377.6 108.8,388.8 108.8,396.9 95.5,396.9 89.4,392.8 83.3,392.8 78.2,394.9 73.1,388.8 78.2,384.7 83.3,380.6 83.3,372.5 79.2,370.4" fill="url(#pG)" /><polygon points="64.9,378.6 71.1,380.6 71.1,385.7 64.9,385.7" fill="url(#pG)" /><polygon points="14,401 30.3,401 34.4,405.1 30.3,409.1 30.3,419.3 18.1,419.3" fill="url(#pG)" /><polygon points="18.1,390.8 30.3,395.9 38.5,388.8 48.6,388.8 56.8,384.7 67,386.7 75.1,394.9 83.3,401 89.4,403 97.5,409.1 109.8,409.1 109.8,421.4 97.5,439.7 85.3,447.9 62.9,451.9 40.5,447.9 22.2,429.5 30.3,419.3 30.3,409.1 34.4,405.1 30.3,401 18.1,401" fill="url(#pR)" /><polygon points="54.8,392.8 57.8,392.8 57.8,403 54.8,403" fill="url(#pO)" /><polygon points="59.9,395.9 61.9,395.9 61.9,403 59.9,403" fill="url(#pO)" /><polygon points="75.1,409.1 79.2,409.1 79.2,431.6 75.1,431.6" fill="url(#pO)" /><polygon points="97.5,401 103.7,401 103.7,413.2 97.5,413.2" fill="url(#pO)" /><polygon points="73.1,431.6 81.2,431.6 81.2,441.7 73.1,441.7" fill="url(#pO)" /><polygon points="48.6,439.7 51.7,439.7 51.7,445.8 48.6,445.8" fill="url(#pO)" /><polygon points="75.1,425.4 77.2,425.4 77.2,437.7 75.1,437.7" fill="url(#pG)" /><polygon points="34.4,408.1 48.6,405.1 61.9,406.1 75.1,409.1 75.1,417.3 69,425.4 60.9,430.5 48.6,430.5 40.5,425.4 34.4,417.3" fill="#000" /><clipPath id="c5k1"><polygon points="34.4,408.1 48.6,405.1 61.9,406.1 75.1,409.1 75.1,417.3 69,425.4 60.9,430.5 48.6,430.5 40.5,425.4 34.4,417.3" fill="#000" /></clipPath><g clip-path="url(#c5k1)"><polygon points="34.4,408.1 48.6,405.1 61.9,406.1 75.1,409.1 75.1,417.3 69,425.4 60.9,430.5 48.6,430.5 40.5,425.4 34.4,417.3" fill="none" stroke="url(#pK)" stroke-width="6"/></g><polygon points="26.2,425.4 34.4,423.4 40.5,431.6 48.6,435.6 44.6,441.7 36.4,439.7 28.3,433.6" fill="#000" /><clipPath id="c5k2"><polygon points="26.2,425.4 34.4,423.4 40.5,431.6 48.6,435.6 44.6,441.7 36.4,439.7 28.3,433.6" fill="#000" /></clipPath><g clip-path="url(#c5k2)"><polygon points="26.2,425.4 34.4,423.4 40.5,431.6 48.6,435.6 44.6,441.7 36.4,439.7 28.3,433.6" fill="none" stroke="url(#pK)" stroke-width="8"/></g><polygon points="83.3,417.3 89.4,413.2 93.5,419.3 97.5,425.4 93.5,433.6 85.3,431.6" fill="#000" /><clipPath id="c5k3"><polygon points="83.3,417.3 89.4,413.2 93.5,419.3 97.5,425.4 93.5,433.6 85.3,431.6" fill="#000" /></clipPath><g clip-path="url(#c5k3)"><polygon points="83.3,417.3 89.4,413.2 93.5,419.3 97.5,425.4 93.5,433.6 85.3,431.6" fill="none" stroke="url(#pK)" stroke-width="8"/></g><polygon points="60.9,429.5 73.1,427.5 75.1,435.6 64.9,435.6" fill="#000" /><clipPath id="c5k4"><polygon points="60.9,429.5 73.1,427.5 75.1,435.6 64.9,435.6" fill="#000" /></clipPath><g clip-path="url(#c5k4)"><polygon points="60.9,429.5 73.1,427.5 75.1,435.6 64.9,435.6" fill="none" stroke="url(#pK)" stroke-width="6"/></g></g><g fill="none" stroke="#0e8a94" stroke-width="1"><circle cx="62.5" cy="406.5" r="15.0"/><circle cx="62.5" cy="406.5" r="30.0"/><circle cx="62.5" cy="406.5" r="45.0"/><path d="M15.5 406.5H109.5M62.5 359.5V453.5" shape-rendering="crispEdges"/></g><clipPath id="c6"><rect x="118" y="392" width="4" height="29"/><rect x="122" y="384" width="4" height="45"/><rect x="126" y="378" width="4" height="57"/><rect x="130" y="374" width="4" height="65"/><rect x="134" y="370" width="4" height="73"/><rect x="138" y="368" width="4" height="77"/><rect x="142" y="366" width="4" height="81"/><rect x="146" y="364" width="4" height="85"/><rect x="150" y="362" width="4" height="89"/><rect x="154" y="362" width="4" height="89"/><rect x="158" y="362" width="4" height="89"/><rect x="162" y="362" width="4" height="89"/><rect x="166" y="362" width="4" height="89"/><rect x="170" y="362" width="4" height="89"/><rect x="174" y="364" width="4" height="85"/><rect x="178" y="364" width="4" height="85"/><rect x="182" y="366" width="4" height="81"/><rect x="186" y="370" width="4" height="73"/><rect x="190" y="372" width="4" height="69"/><rect x="194" y="376" width="4" height="61"/><rect x="198" y="382" width="4" height="49"/><rect x="202" y="390" width="4" height="33"/></clipPath><g clip-path="url(#c6)" shape-rendering="crispEdges"><rect x="115.9" y="359.9" width="93.2" height="93.2" fill="url(#pO)"/><polygon points="167,372.5 178.2,370.4 189.4,369.4 199.6,375.5 205.7,384.7 209.8,396.9 209.8,417.3 203.7,421.4 199.6,413.2 195.5,409.1 197.5,396.9 193.5,386.7 187.4,380.6 178.2,378.6 171.1,376.5" fill="url(#pG)" /><polygon points="127.3,393.9 134.4,390.8 140.5,393.9 156.8,394.9 167,393.9 173.1,399 173.1,404.1 156.8,404.1 151.7,401 140.5,401 130.3,401" fill="url(#pG)" /><polygon points="183.3,435.6 193.5,435.6 195.5,441.7 187.4,445.8 183.3,441.7" fill="url(#pG)" /><polygon points="151.7,361.3 161.9,360.2 173.1,361.3 179.2,366.4 173.1,369.4 164.9,370.4 156.8,368.4" fill="url(#pR)" /><polygon points="128.3,376.5 136.4,372.5 140.5,376.5 136.4,382.7 128.3,386.7 122.2,384.7" fill="url(#pR)" /><polygon points="183.3,403 193.5,403 197.5,411.2 197.5,423.4 189.4,431.6 179.2,429.5 177.2,419.3 183.3,411.2" fill="url(#pR)" /><polygon points="151.7,435.6 161.9,435.6 175.1,427.5 173.1,433.6 164.9,441.7 161.9,451.9 151.7,451.9" fill="url(#pR)" /><polygon points="114,408.1 148.6,407.1 156.8,411.2 167,410.2 177.2,408.1 181.2,411.2 183.3,419.3 177.2,427.5 169,431.6 161.9,433.6 151.7,437.7 148.6,451.9 126.2,437.7 114,417.3" fill="#000" /><clipPath id="c6k1"><polygon points="114,408.1 148.6,407.1 156.8,411.2 167,410.2 177.2,408.1 181.2,411.2 183.3,419.3 177.2,427.5 169,431.6 161.9,433.6 151.7,437.7 148.6,451.9 126.2,437.7 114,417.3" fill="#000" /></clipPath><g clip-path="url(#c6k1)"><polygon points="114,408.1 148.6,407.1 156.8,411.2 167,410.2 177.2,408.1 181.2,411.2 183.3,419.3 177.2,427.5 169,431.6 161.9,433.6 151.7,437.7 148.6,451.9 126.2,437.7 114,417.3" fill="none" stroke="url(#pK)" stroke-width="4"/></g></g><g fill="none" stroke="#0e8a94" stroke-width="1"><circle cx="162.5" cy="406.5" r="15.0"/><circle cx="162.5" cy="406.5" r="30.0"/><circle cx="162.5" cy="406.5" r="45.0"/><path d="M115.5 406.5H209.5M162.5 359.5V453.5" shape-rendering="crispEdges"/></g><clipPath id="c7"><rect x="18" y="492" width="4" height="29"/><rect x="22" y="484" width="4" height="45"/><rect x="26" y="478" width="4" height="57"/><rect x="30" y="474" width="4" height="65"/><rect x="34" y="470" width="4" height="73"/><rect x="38" y="468" width="4" height="77"/><rect x="42" y="466" width="4" height="81"/><rect x="46" y="464" width="4" height="85"/><rect x="50" y="462" width="4" height="89"/><rect x="54" y="462" width="4" height="89"/><rect x="58" y="462" width="4" height="89"/><rect x="62" y="462" width="4" height="89"/><rect x="66" y="462" width="4" height="89"/><rect x="70" y="462" width="4" height="89"/><rect x="74" y="464" width="4" height="85"/><rect x="78" y="464" width="4" height="85"/><rect x="82" y="466" width="4" height="81"/><rect x="86" y="470" width="4" height="73"/><rect x="90" y="472" width="4" height="69"/><rect x="94" y="476" width="4" height="61"/><rect x="98" y="482" width="4" height="49"/><rect x="102" y="490" width="4" height="33"/></clipPath><g clip-path="url(#c7)" shape-rendering="crispEdges"><rect x="15.899999999999999" y="459.9" width="93.2" height="93.2" fill="url(#pO)"/><polygon points="45.6,465.3 51.7,460.2 61.9,460.2 61.9,476.5 56.8,482.7 51.7,482.7 45.6,476.5" fill="url(#pG)" /><polygon points="75.1,469.4 83.3,469.4 89.4,474.5 97.5,476.5 105.7,483.7 109.8,490.8 107.7,496.9 95.5,490.8 89.4,486.7 83.3,484.7 79.2,478.6 75.1,476.5" fill="url(#pG)" /><polygon points="101.6,507.1 109.8,507.1 107.7,513.2 101.6,511.2" fill="url(#pG)" /><polygon points="28.3,476.5 34.4,474.5 42.5,480.6 46.6,486.7 56.8,488.8 61.9,484.7 69,476.5 73.1,480.6 73.1,488.8 67,494.9 61.9,496.9 53.7,496.9 50.7,503 20.1,503 18.1,496.9 24.2,482.7" fill="url(#pR)" /><polygon points="89.4,496.9 97.5,499 101.6,505.1 101.6,517.3 93.5,519.3 83.3,511.2 75.1,511.2 67,509.1 62.9,505.1 73.1,503 89.4,503" fill="url(#pR)" /><polygon points="61.9,504.1 89.4,503 93.5,519.3 79.2,518.3 69,516.3 61.9,511.2" fill="url(#pR)" /><polygon points="53.7,497.9 61.9,497.9 61.9,504.1 53.7,504.1" fill="url(#pG)" /><polygon points="14,490.8 26.2,474.5 34.4,478.6 30.3,490.8 34.4,501 18.1,504.1" fill="url(#pK)" /><polygon points="14,507.1 50.7,506.1 61.9,509.1 69,513.2 79.2,515.3 89.4,515.3 99.6,519.3 107.7,527.5 89.4,545.8 62.9,554 34.4,545.8 16,521.4" fill="#000" /><clipPath id="c7k1"><polygon points="14,507.1 50.7,506.1 61.9,509.1 69,513.2 79.2,515.3 89.4,515.3 99.6,519.3 107.7,527.5 89.4,545.8 62.9,554 34.4,545.8 16,521.4" fill="#000" /></clipPath><g clip-path="url(#c7k1)"><polygon points="14,507.1 50.7,506.1 61.9,509.1 69,513.2 79.2,515.3 89.4,515.3 99.6,519.3 107.7,527.5 89.4,545.8 62.9,554 34.4,545.8 16,521.4" fill="none" stroke="url(#pK)" stroke-width="14"/></g><polygon points="40.5,539.7 50.7,537.7 56.8,543.8 48.6,547.9" fill="url(#pR)" /><polygon points="64.9,535.6 69,535.6 69,539.7 64.9,539.7" fill="url(#pR)" /></g><g fill="none" stroke="#0e8a94" stroke-width="1"><circle cx="62.5" cy="506.5" r="15.0"/><circle cx="62.5" cy="506.5" r="30.0"/><circle cx="62.5" cy="506.5" r="45.0"/><path d="M15.5 506.5H109.5M62.5 459.5V553.5" shape-rendering="crispEdges"/></g><clipPath id="c8"><rect x="118" y="492" width="4" height="29"/><rect x="122" y="484" width="4" height="45"/><rect x="126" y="478" width="4" height="57"/><rect x="130" y="474" width="4" height="65"/><rect x="134" y="470" width="4" height="73"/><rect x="138" y="468" width="4" height="77"/><rect x="142" y="466" width="4" height="81"/><rect x="146" y="464" width="4" height="85"/><rect x="150" y="462" width="4" height="89"/><rect x="154" y="462" width="4" height="89"/><rect x="158" y="462" width="4" height="89"/><rect x="162" y="462" width="4" height="89"/><rect x="166" y="462" width="4" height="89"/><rect x="170" y="462" width="4" height="89"/><rect x="174" y="464" width="4" height="85"/><rect x="178" y="464" width="4" height="85"/><rect x="182" y="466" width="4" height="81"/><rect x="186" y="470" width="4" height="73"/><rect x="190" y="472" width="4" height="69"/><rect x="194" y="476" width="4" height="61"/><rect x="198" y="482" width="4" height="49"/><rect x="202" y="490" width="4" height="33"/></clipPath><g clip-path="url(#c8)" shape-rendering="crispEdges"><rect x="115.9" y="459.9" width="93.2" height="93.2" fill="url(#pO)"/><polygon points="138.5,481.6 146.6,480.6 148.6,486.7 142.5,489.8 138.5,486.7" fill="url(#pG)" /><polygon points="130.3,493.9 138.5,493.9 138.5,501 132.3,503 130.3,499" fill="url(#pG)" /><polygon points="189.4,487.8 197.5,486.7 201.6,493.9 199.6,501 193.5,503 189.4,496.9" fill="url(#pG)" /><polygon points="162.9,490.8 169,490.8 169,503 162.9,503" fill="url(#pG)" /><polygon points="157.8,471.5 161.9,471.5 161.9,475.5 157.8,475.5" fill="url(#pG)" /><polygon points="164.9,484.7 169,484.7 169,488.8 164.9,488.8" fill="url(#pG)" /><polygon points="193.5,526.5 197.5,526.5 197.5,530.5 193.5,530.5" fill="url(#pG)" /><polygon points="132.3,472.5 140.5,466.4 151.7,467.4 154.8,472.5 151.7,476.5 142.5,477.6 136.4,476.5" fill="url(#pR)" /><polygon points="154.8,480.6 160.9,478.6 162.9,484.7 158.8,487.8 154.8,485.7" fill="url(#pR)" /><polygon points="183.3,480.6 188.4,480.6 189.4,485.7 184.3,486.7" fill="url(#pR)" /><polygon points="173.1,489.8 179.2,487.8 183.3,493.9 177.2,496.9 173.1,494.9" fill="url(#pR)" /><polygon points="116,495.9 126.2,499 128.3,505.1 116,505.1" fill="url(#pR)" /><polygon points="162.9,537.7 173.1,531.6 183.3,527.5 189.4,531.6 189.4,539.7 183.3,547.9 169,551.9 162.9,551.9" fill="url(#pR)" /><polygon points="201.6,515.3 207.7,517.3 207.7,523.4 201.6,521.4" fill="url(#pR)" /><polygon points="114,507.1 148.6,506.1 158.8,509.1 167,510.2 175.1,507.1 175.1,499 181.2,495.9 189.4,499 191.4,509.1 189.4,517.3 183.3,525.4 173.1,530.5 162.9,535.6 161.9,554 134.4,545.8 118.1,525.4" fill="#000" /><clipPath id="c8k1"><polygon points="114,507.1 148.6,506.1 158.8,509.1 167,510.2 175.1,507.1 175.1,499 181.2,495.9 189.4,499 191.4,509.1 189.4,517.3 183.3,525.4 173.1,530.5 162.9,535.6 161.9,554 134.4,545.8 118.1,525.4" fill="#000" /></clipPath><g clip-path="url(#c8k1)"><polygon points="114,507.1 148.6,506.1 158.8,509.1 167,510.2 175.1,507.1 175.1,499 181.2,495.9 189.4,499 191.4,509.1 189.4,517.3 183.3,525.4 173.1,530.5 162.9,535.6 161.9,554 134.4,545.8 118.1,525.4" fill="none" stroke="url(#pK)" stroke-width="8"/></g></g><g fill="none" stroke="#0e8a94" stroke-width="1"><circle cx="162.5" cy="506.5" r="15.0"/><circle cx="162.5" cy="506.5" r="30.0"/><circle cx="162.5" cy="506.5" r="45.0"/><path d="M115.5 506.5H209.5M162.5 459.5V553.5" shape-rendering="crispEdges"/></g><rect x="115" y="260" width="97" height="95" fill="none" stroke="#f00000" stroke-width="2" shape-rendering="crispEdges"/><circle cx="201.5" cy="245" r="7.5" fill="none" stroke="#808080"/><circle cx="201.5" cy="345" r="7.5" fill="none" stroke="#808080"/><circle cx="201.5" cy="445" r="7.5" fill="none" stroke="#808080"/><circle cx="201.5" cy="545" r="7.5" fill="none" stroke="#808080"/><rect x="206" y="241" width="5" height="8" fill="#c0c0c0"/><path d="M196 345H207M201 345v3.5" stroke="#00a000" stroke-width="1.600" fill="none"/><path d="M201.500 442.5v5" stroke="#00a000" stroke-width="1.600" fill="none"/><path d="M196 545H207.500" stroke="#00a000" stroke-width="2" fill="none"/><path d="M197 545l1-2 1 2zM204.500 545l1-2 1 2z" fill="#00a000" stroke="#00a000" stroke-width="0.5"/><rect x="89.5" y="237.5" width="50" height="14" fill="#fff" stroke="#000" shape-rendering="crispEdges"/><text x="92" y="248" font-size="11.6" textLength="43.7" font-family="Liberation Sans" fill="#000">09-10-97</text><rect x="89.5" y="337.5" width="50" height="14" fill="#fff" stroke="#000" shape-rendering="crispEdges"/><text x="92" y="348" font-size="11.6" textLength="43.7" font-family="Liberation Sans" fill="#000">28-01-98</text><rect x="89.5" y="437.5" width="50" height="14" fill="#fff" stroke="#000" shape-rendering="crispEdges"/><text x="92" y="448" font-size="11.6" textLength="43.7" font-family="Liberation Sans" fill="#000">14-09-01</text><rect x="89.5" y="537.5" width="50" height="14" fill="#fff" stroke="#000" shape-rendering="crispEdges"/><text x="92" y="548" font-size="11.6" textLength="43.7" font-family="Liberation Sans" fill="#000">21-01-05</text><rect x="214" y="157" width="15" height="402" fill="#f7f7f7"/><rect x="214" y="157" width="15" height="17" fill="#f0f0f0"/><path d="M214.5 174V157.5H229" stroke="#fff" fill="none"/><path d="M228.5 157V173.5H214" stroke="#a0a0a0" fill="none"/><path d="M218.500 166.500h6l-3 -3z" fill="#000"/><rect x="214" y="174" width="15" height="246" fill="#f0f0f0"/><path d="M214.500 420V174.500H229" stroke="#fff" fill="none"/><path d="M228.500 174V419.500H214" stroke="#a0a0a0" fill="none"/><rect x="214" y="543" width="15" height="16" fill="#f0f0f0"/><path d="M214.500 559V543.500H229" stroke="#fff" fill="none"/><path d="M228.500 543V558.500H214" stroke="#a0a0a0" fill="none"/><path d="M218.500 551h6l-3 3z" fill="#000"/></svg></div></div><div class="win" style="left:237px;top:-1px;width:591px;height:490px;background:linear-gradient(#a7c1e0,#c3d6ec 60px,#bdd2ea)"><div class="cap"><svg class="abs" style="left:8px;top:8px" width="18" height="20" viewBox="0 0 18 20"><rect x="4.500" y="13" width="8" height="4.500" fill="#a0e4f4" stroke="#000" stroke-width="1"/><circle cx="8.500" cy="7.500" r="6.300" fill="#ffff00" stroke="#000" stroke-width="1.200"/><circle cx="8.500" cy="7.500" r="3.200" fill="#f00000"/><path d="M8.500 2v11M3 7.500h11" stroke="#000" stroke-width="0.900"/></svg><div class="abs" style="left:29.500px;top:12px;color:#000;font-size:12.5px;white-space:nowrap;letter-spacing:-0.435px">Nobody, James &nbsp;: &nbsp;Left and Right Field 28-01-1998</div><div class="abs" style="left:480px;top:9px;width:32px;height:18px;border:1px solid #62768f;border-radius:3px;background:linear-gradient(#c6d8ee,#b4cbe6 45%,#9dbadb 50%,#b2cbe6);box-shadow:inset 0 0 0 1px rgba(255,255,255,.55)"><div class="abs" style="left:10px;top:8px;width:11px;height:4px;background:#fff;border:1px solid #4a5260;border-radius:1px"></div></div><div class="abs" style="left:514px;top:9px;width:32px;height:18px;border:1px solid #62768f;border-radius:3px;background:linear-gradient(#c6d8ee,#b4cbe6 45%,#9dbadb 50%,#b2cbe6);box-shadow:inset 0 0 0 1px rgba(255,255,255,.55)"><div class="abs" style="left:10px;top:3px;width:11px;height:9px;border:1px solid #4a5260;border-radius:1px;background:#fff"><div class="abs" style="left:2px;top:2px;width:5px;height:3px;border:1px solid #4a5260;background:linear-gradient(#c6d8ee,#b4cbe6 45%,#9dbadb 50%,#b2cbe6)"></div></div></div><div class="abs" style="left:548px;top:9px;width:32px;height:18px;border:1px solid #5a1e18;border-radius:3px;background:linear-gradient(#e4a99c,#d4705c 45%,#c0321c 50%,#d05a3c);box-shadow:inset 0 0 0 1px rgba(255,255,255,.55)"><svg class="abs" style="left:8px;top:2px" width="14" height="12"><path d="M2 2.500l3-1 2 2.300 2-2.300 3 1-3 3.500 3 3.500-3 1-2-2.300-2 2.300-3-1 3-3.500z" fill="#fff" stroke="#4a5260" stroke-width="1"/></svg></div></div><div class="abs" style="left:9px;top:32px;width:571px;height:438px;background:#f0f0f0;box-shadow:-1px -1px 0 0 #606060,-2px -2px 0 0 #a0a0a0,1px 1px 0 0 #fff,2px 2px 0 0 #e0e4ea,inset 1px 1px 0 #fafafa"><div class="btn" style="left:6px;top:3px;width:27px;height:26px"><svg width="27" height="26"><g transform="translate(0.5,0.5)"><text x="5.5" y="19.5" font-size="19" font-weight="bold" font-family="Liberation Sans" fill="#000" stroke="#000" stroke-width="1.6">?</text></g><text x="5" y="19" font-size="19" font-weight="bold" font-family="Liberation Sans" fill="#ffff00" stroke="#000" stroke-width="0.5">?</text></svg></div><div class="btn" style="left:33px;top:3px;width:27px;height:26px"><svg width="27" height="26"><circle cx="12.8" cy="12.6" r="8" fill="#fff"/><path d="M10.5 10.5h3.5v6h2v1.6h-6v-1.6h2v-4.4h-1.5z" fill="#000"/><rect x="11.6" y="7" width="2.4" height="2.2" fill="#000"/></svg></div><div class="btn" style="left:60px;top:3px;width:27px;height:26px"><svg width="27" height="26"><text x="4" y="10.800" font-size="7.800" font-family="Liberation Sans" fill="#000" stroke="#000" stroke-width="0.25" letter-spacing="-0.500">24 16</text><text x="4" y="19.600" font-size="7.800" font-family="Liberation Sans" fill="#000" stroke="#000" stroke-width="0.25" letter-spacing="-0.500">31 &lt;0</text></svg></div><div class="btn" style="left:87px;top:3px;width:27px;height:26px"><svg width="27" height="26"><circle cx="13" cy="13" r="7.600" fill="#fff" stroke="#000" stroke-width="1.200"/><path d="M5.400 13a7.600 7.600 0 0 1 15.200 0l-6 1.500-4-1z" fill="#000"/><path d="M14 8l5.500 3.500-2 1.500z" fill="#a0a0a0"/><circle cx="16.300" cy="13" r="1.700" fill="#000"/></svg></div><div class="btn" style="left:114px;top:3px;width:27px;height:26px"><svg width="27" height="26"><circle cx="13" cy="13" r="7.600" fill="url(#pDit)" stroke="#000" stroke-width="1.200"/></svg></div><div class="btn" style="left:141px;top:3px;width:27px;height:26px"><svg width="27" height="26"><text x="4.3" y="11" font-size="8.5" font-family="Liberation Sans" fill="#f00000" letter-spacing="-0.4">-5</text><text x="12.6" y="20" font-size="8.5" font-family="Liberation Sans" fill="#f00000" letter-spacing="-0.7">-12</text><circle cx="17.8" cy="7.8" r="1.4" fill="none" stroke="#000" stroke-width="0.9"/><circle cx="7.7" cy="16.8" r="1.4" fill="none" stroke="#000" stroke-width="0.9"/></svg></div><div class="btn dn" style="left:168px;top:3px;width:27px;height:26px"><svg width="27" height="26"><circle cx="14.4" cy="14.5" r="8" fill="#a0a0a0"/></svg></div><div class="btn" style="left:195px;top:3px;width:27px;height:26px"><svg width="27" height="26"><clipPath id="cc7"><circle cx="13" cy="13" r="7.400"/></clipPath><g clip-path="url(#cc7)"><rect x="5" y="5" width="16" height="16" fill="#ffff00"/><rect x="5" y="5" width="8" height="7.500" fill="#0000ff"/><path d="M13 5h9v12l-4-2-3-4z" fill="#ff0000"/><path d="M10 11l4-3 1 3-3 2z" fill="#ff00ff"/><path d="M5 16h16v6h-16z" fill="#00d000"/><path d="M9 16l6-2 4 3v5h-10z" fill="#00d000"/><rect x="7" y="16" width="12" height="5" fill="url(#pDot)"/></g><circle cx="13" cy="13" r="7.400" fill="none" stroke="#000" stroke-width="1.300"/><path d="M12 10h7M15.500 6.500v7" stroke="#fff" stroke-width="1.700"/></svg></div><div class="btn" style="left:222px;top:3px;width:27px;height:26px"><svg width="27" height="26"><path d="M5.5 5v15.5H22" fill="none" stroke="#000" stroke-width="1.2"/><path d="M6 8c4 3.500 8 2.500 12 5.500" fill="none" stroke="#505050" stroke-width="0.800"/><path d="M18 13.5c2 1.2 3 3 3.2 5" fill="none" stroke="#f00000" stroke-width="1.6"/></svg></div><div class="btn" style="left:249px;top:3px;width:27px;height:26px"><svg width="27" height="26"><path d="M3 5v17h17.500v-1.500h-16v-15.500z" fill="#000080"/><rect x="4.500" y="3.500" width="17" height="17" fill="#000"/><rect x="6" y="5" width="14" height="2.500" fill="#fff"/><g fill="#f00000"><rect x="13.500" y="5.800" width="1" height="1"/><rect x="15.500" y="5.800" width="1" height="1"/><rect x="17.500" y="5.800" width="1" height="1"/></g><g fill="#fff"><rect x="6.0" y="9.0" width="2.500" height="2.400"/><rect x="9.7" y="9.0" width="2.500" height="2.400"/><rect x="13.4" y="9.0" width="2.500" height="2.400"/><rect x="17.1" y="9.0" width="2.500" height="2.400"/><rect x="6.0" y="12.9" width="2.500" height="2.400"/><rect x="9.7" y="12.9" width="2.500" height="2.400"/><rect x="13.4" y="12.9" width="2.500" height="2.400"/><rect x="17.1" y="12.9" width="2.500" height="2.400"/><rect x="6.0" y="16.8" width="2.500" height="2.400"/><rect x="9.7" y="16.8" width="2.500" height="2.400"/><rect x="13.4" y="16.8" width="2.500" height="2.400"/><rect x="13.400" y="16.800" width="6.200" height="2.400"/></g></svg></div><div class="btn" style="left:276px;top:3px;width:27px;height:26px"><svg width="27" height="26"><path d="M13 5.500l-9 10.500 9 3 9-3z" fill="#000"/><path d="M13 5.500l-7.500 9 7.500 2.500 7.500-2.500z" fill="#800000"/><path d="M13 5.500l-6 7 6 2 6-2z" fill="#008000"/><path d="M13 5.500l-4.500 5 4.500 1.500 4.500-1.500z" fill="#00e000"/><path d="M13 5.500l-3 3.300 3 1 3-1z" fill="#ffff00"/></svg></div><div class="btn" style="left:303px;top:3px;width:27px;height:26px"><svg width="27" height="26"><clipPath id="dc8013"><ellipse cx="8" cy="13.5" rx="5" ry="7.2"/></clipPath><g clip-path="url(#dc8013)"><rect x="2" y="5.5" width="12" height="16" fill="#ffff00"/><rect x="2" y="5.5" width="6" height="6" fill="#0000ff"/><path d="M6 5.5h8v9h-5z" fill="#ff0000"/><path d="M2 10.5l5-3 1 3-3 3z" fill="#ff00ff"/><rect x="2" y="16.0" width="12" height="6" fill="#00d000"/><rect x="2" y="16.5" width="12" height="5" fill="url(#pDot)"/></g><ellipse cx="8" cy="13.5" rx="5" ry="7.2" fill="none" stroke="#000" stroke-width="1.1"/><circle cx="8.5" cy="13.5" r="1.5" fill="#000"/><clipPath id="dc16513"><ellipse cx="16.5" cy="13.5" rx="5" ry="7.2"/></clipPath><g clip-path="url(#dc16513)"><rect x="10.5" y="5.5" width="12" height="16" fill="#ffff00"/><rect x="10.5" y="5.5" width="6" height="6" fill="#0000ff"/><path d="M14.5 5.5h8v9h-5z" fill="#ff0000"/><path d="M10.5 10.5l5-3 1 3-3 3z" fill="#ff00ff"/><rect x="10.5" y="16.0" width="12" height="6" fill="#00d000"/><rect x="10.5" y="16.5" width="12" height="5" fill="url(#pDot)"/></g><ellipse cx="16.5" cy="13.5" rx="5" ry="7.2" fill="none" stroke="#000" stroke-width="1.1"/><circle cx="17.0" cy="13.5" r="1.5" fill="#000"/><path d="M9.500 5.500h5M12 3v5" stroke="#fff" stroke-width="1.200"/></svg></div><div class="btn" style="left:330px;top:3px;width:27px;height:26px"><svg width="27" height="26"><clipPath id="dc8013"><ellipse cx="8" cy="13.5" rx="5" ry="7.2"/></clipPath><g clip-path="url(#dc8013)"><rect x="2" y="5.5" width="12" height="16" fill="#ffff00"/><rect x="2" y="5.5" width="6" height="6" fill="#0000ff"/><path d="M6 5.5h8v9h-5z" fill="#ff0000"/><path d="M2 10.5l5-3 1 3-3 3z" fill="#ff00ff"/><rect x="2" y="16.0" width="12" height="6" fill="#00d000"/><rect x="2" y="16.5" width="12" height="5" fill="url(#pDot)"/></g><ellipse cx="8" cy="13.5" rx="5" ry="7.2" fill="none" stroke="#000" stroke-width="1.1"/><circle cx="8.5" cy="13.5" r="1.5" fill="#000"/><clipPath id="dc16513"><ellipse cx="16.5" cy="13.5" rx="5" ry="7.2"/></clipPath><g clip-path="url(#dc16513)"><rect x="10.5" y="5.5" width="12" height="16" fill="#ffff00"/><rect x="10.5" y="5.5" width="6" height="6" fill="#0000ff"/><path d="M14.5 5.5h8v9h-5z" fill="#ff0000"/><path d="M10.5 10.5l5-3 1 3-3 3z" fill="#ff00ff"/><rect x="10.5" y="16.0" width="12" height="6" fill="#00d000"/><rect x="10.5" y="16.5" width="12" height="5" fill="url(#pDot)"/></g><ellipse cx="16.5" cy="13.5" rx="5" ry="7.2" fill="none" stroke="#000" stroke-width="1.1"/><circle cx="17.0" cy="13.5" r="1.5" fill="#000"/><path d="M8 5h6" stroke="#fff" stroke-width="1.200"/></svg></div><div class="btn" style="left:357px;top:3px;width:27px;height:26px"><svg width="27" height="26"><clipPath id="dc7513"><ellipse cx="7.5" cy="13.5" rx="5" ry="7.2"/></clipPath><g clip-path="url(#dc7513)"><rect x="1.5" y="5.5" width="12" height="16" fill="#ffff00"/><rect x="1.5" y="5.5" width="6" height="6" fill="#0000ff"/><path d="M5.5 5.5h8v9h-5z" fill="#ff0000"/><path d="M1.5 10.5l5-3 1 3-3 3z" fill="#ff00ff"/><rect x="1.5" y="16.0" width="12" height="6" fill="#00d000"/><rect x="1.5" y="16.5" width="12" height="5" fill="url(#pDot)"/></g><ellipse cx="7.5" cy="13.5" rx="5" ry="7.2" fill="none" stroke="#000" stroke-width="1.1"/><circle cx="8.0" cy="13.5" r="1.5" fill="#000"/><clipPath id="dc18013"><ellipse cx="18" cy="13.5" rx="5" ry="7.2"/></clipPath><g clip-path="url(#dc18013)"><rect x="12" y="5.5" width="12" height="16" fill="#ffff00"/><rect x="12" y="5.5" width="6" height="6" fill="#0000ff"/><path d="M16 5.5h8v9h-5z" fill="#ff0000"/><path d="M12 10.5l5-3 1 3-3 3z" fill="#ff00ff"/><rect x="12" y="16.0" width="12" height="6" fill="#00d000"/><rect x="12" y="16.5" width="12" height="5" fill="url(#pDot)"/></g><ellipse cx="18" cy="13.5" rx="5" ry="7.2" fill="none" stroke="#000" stroke-width="1.1"/><circle cx="18.5" cy="13.5" r="1.5" fill="#000"/><path d="M9 5h6" stroke="#fff" stroke-width="1.200"/></svg></div><div class="btn" style="left:392px;top:3px;width:27px;height:26px"><svg width="27" height="26"><circle cx="10.500" cy="9.800" r="5.800" fill="#fff" stroke="#000" stroke-width="1.800"/><path d="M14.800 14.200l7.200 7.200" stroke="#000" stroke-width="3"/></svg></div><div class="btn" style="left:419px;top:3px;width:27px;height:26px"><svg width="27" height="26"><rect x="3" y="3.500" width="3" height="4" fill="#ffff00"/><rect x="3" y="7.500" width="3" height="4" fill="#00c000"/><rect x="3" y="11.500" width="3" height="2.500" fill="#006000"/><rect x="3" y="14" width="3" height="3.500" fill="#c00000"/><rect x="3" y="17.500" width="3" height="3" fill="#0000ff"/><rect x="3" y="20.500" width="3" height="2" fill="#000"/><text x="7" y="8.500" font-size="6" font-weight="bold" font-family="Liberation Sans" fill="#000">2</text><text x="7" y="13.300" font-size="6" font-weight="bold" font-family="Liberation Sans" fill="#000">0</text><text x="7" y="18" font-size="6" font-weight="bold" font-family="Liberation Sans" fill="#000">4</text><text x="7" y="22.800" font-size="6" font-weight="bold" font-family="Liberation Sans" fill="#000">6</text><rect x="11" y="11" width="2.600" height="5" fill="#a0a0a0"/><rect x="11" y="15.500" width="2.600" height="7.500" fill="#000"/><text x="15.500" y="8.500" font-size="6" font-weight="bold" font-family="Liberation Sans" fill="#000">0</text><text x="15.500" y="13.300" font-size="6" font-weight="bold" font-family="Liberation Sans" fill="#000">4</text><text x="15.500" y="18" font-size="6" font-weight="bold" font-family="Liberation Sans" fill="#000">7</text><text x="15.500" y="22.800" font-size="6" font-weight="bold" font-family="Liberation Sans" fill="#000">d</text></svg></div><div class="btn" style="left:446px;top:3px;width:27px;height:26px"><svg width="27" height="26"><path d="M9 6.5h8.5l-1.5 5h-9z" fill="#fff" stroke="#000" stroke-width="0.9"/><path d="M10 8.2h6M9.5 9.8h6" stroke="#808080" stroke-width="0.7"/><path d="M5.5 12.5l2-1.5h11.5l2 1.5v5l-2.5 2.2h-11l-2-1.5z" fill="#e0e0e0" stroke="#000" stroke-width="0.9"/><path d="M5.5 15.2h13v4.5h-11l-2-1.5z" fill="#707070"/><path d="M5.5 14.8h13.2l2.3-2" fill="none" stroke="#000" stroke-width="0.8"/><rect x="11.5" y="16.2" width="3.5" height="1.2" fill="#f00000"/><path d="M18.7 15v4.5l2.3-2v-4.8z" fill="#e0e0e0" stroke="#000" stroke-width="0.6"/></svg></div><div class="btn dn" style="left:473px;top:3px;width:27px;height:26px"><svg width="27" height="26"><g transform="translate(1,1)"><circle cx="13" cy="13" r="8" fill="none" stroke="#a8a8a8" stroke-width="1.200"/><path d="M4 13h18M13 6v14" stroke="#a8a8a8" stroke-width="1.200"/><path d="M11 8l2-2.500 2 2.500M11 18l2 2.500 2-2.500" fill="none" stroke="#a8a8a8" stroke-width="1"/></g></svg></div><div class="abs" style="left:0;top:35px;width:571px;height:1px;background:#a0a0a0"></div><div class="abs" style="left:0;top:36px;width:571px;height:1px;background:#fff"></div><svg class="abs" style="left:0;top:0" width="572" height="438" viewBox="248 121 572 438"><rect x="254" y="209" width="269" height="292" fill="#c0c0c0"/><path d="M255 501V210H523" fill="none" stroke="#808080" stroke-width="2" shape-rendering="crispEdges"/><path d="M255 500H522V210" fill="none" stroke="#fff" stroke-width="2" shape-rendering="crispEdges"/><rect x="538" y="209" width="269" height="292" fill="#c0c0c0"/><path d="M539 501V210H807" fill="none" stroke="#808080" stroke-width="2" shape-rendering="crispEdges"/><path d="M539 500H806V210" fill="none" stroke="#fff" stroke-width="2" shape-rendering="crispEdges"/><clipPath id="c9"><rect x="278" y="331" width="4" height="49"/><rect x="282" y="317" width="4" height="77"/><rect x="286" y="307" width="4" height="97"/><rect x="290" y="299" width="4" height="113"/><rect x="294" y="293" width="4" height="125"/><rect x="298" y="287" width="4" height="137"/><rect x="302" y="283" width="4" height="145"/><rect x="306" y="277" width="4" height="157"/><rect x="310" y="273" width="4" height="165"/><rect x="314" y="271" width="4" height="169"/><rect x="318" y="267" width="4" height="177"/><rect x="322" y="263" width="4" height="185"/><rect x="326" y="261" width="4" height="189"/><rect x="330" y="259" width="4" height="193"/><rect x="334" y="257" width="4" height="197"/><rect x="338" y="255" width="4" height="201"/><rect x="342" y="253" width="4" height="205"/><rect x="346" y="251" width="4" height="209"/><rect x="350" y="249" width="4" height="213"/><rect x="354" y="247" width="4" height="217"/><rect x="358" y="247" width="4" height="217"/><rect x="362" y="245" width="4" height="221"/><rect x="366" y="245" width="4" height="221"/><rect x="370" y="245" width="4" height="221"/><rect x="374" y="243" width="4" height="225"/><rect x="378" y="243" width="4" height="225"/><rect x="382" y="243" width="4" height="225"/><rect x="386" y="243" width="4" height="225"/><rect x="390" y="243" width="4" height="225"/><rect x="394" y="243" width="4" height="225"/><rect x="398" y="243" width="4" height="225"/><rect x="402" y="243" width="4" height="225"/><rect x="406" y="245" width="4" height="221"/><rect x="410" y="245" width="4" height="221"/><rect x="414" y="245" width="4" height="221"/><rect x="418" y="247" width="4" height="217"/><rect x="422" y="249" width="4" height="213"/><rect x="426" y="249" width="4" height="213"/><rect x="430" y="251" width="4" height="209"/><rect x="434" y="253" width="4" height="205"/><rect x="438" y="255" width="4" height="201"/><rect x="442" y="257" width="4" height="197"/><rect x="446" y="259" width="4" height="193"/><rect x="450" y="261" width="4" height="189"/><rect x="454" y="265" width="4" height="181"/><rect x="458" y="267" width="4" height="177"/><rect x="462" y="271" width="4" height="169"/><rect x="466" y="275" width="4" height="161"/><rect x="470" y="279" width="4" height="153"/><rect x="474" y="283" width="4" height="145"/><rect x="478" y="289" width="4" height="133"/><rect x="482" y="295" width="4" height="121"/><rect x="486" y="301" width="4" height="109"/><rect x="490" y="309" width="4" height="93"/><rect x="494" y="319" width="4" height="73"/><rect x="498" y="335" width="4" height="41"/></clipPath><g clip-path="url(#c9)" shape-rendering="crispEdges"><rect x="275.2" y="241.2" width="228.6" height="228.6" fill="url(#pO)"/><polygon points="340.3,251.3 351.5,247.2 362.7,244.1 362.7,262.5 367.8,262.5 367.8,270.6 377.9,270.6 377.9,274.7 392,274.7 398.2,277.8 398.2,290 388,290 377.9,290 377.9,300.2 355.5,300.2 355.5,295.1 350.4,290 350.4,278.8 346.4,274.7 346.4,270.6 342.3,264.5 340.3,258.4" fill="url(#pG)" /><polygon points="421.6,250.3 431.8,250.3 441,252.3 453.2,260.4 464.4,273.7 464.4,276.7 455.2,276.7 455.2,289 444,289 444,276.7 440,276.7 440,269.6 436.9,269.6 436.9,262.5 432.8,262.5 432.8,255.4 421.6,255.4" fill="url(#pG)" /><polygon points="399.2,290 420.6,290 420.6,295.1 444,295.1 444,301.2 455.2,301.2 455.2,312.4 466.4,312.4 466.4,322.6 420.6,322.6 420.6,301.2 399.2,301.2" fill="url(#pG)" /><polygon points="466.4,323.6 469.5,323.6 469.5,346 466.4,346" fill="url(#pG)" /><polygon points="339.2,341.9 357.6,340.9 369.8,335.8 377.9,331.8 389.8,330.7 399.2,330.7 399.2,323.6 420.6,323.6 420.6,331.8 414.5,333.8 409.4,333.8 409.4,346 389.6,346 389.8,354.2 367.8,354 367.8,358.1 363.7,366.3 357.6,366.3 354.5,358.1 353.5,347 339.2,346" fill="url(#pG)" /><polygon points="302.6,350.1 315.8,347 315.8,356 315.8,366.3 312.7,378.5 309.7,378.5 302.6,368.3 298.5,360.1 298.5,352" fill="url(#pG)" /><polygon points="332.1,386.6 336.2,386.6 336.2,413.1 332.1,413.1" fill="url(#pG)" /><polygon points="320.9,435.5 343.3,435.5 354.5,439.6 361.6,443.7 369.8,451.8 369.8,465.1 361.6,466.1 339.2,460" fill="url(#pG)" /><polygon points="444,357.1 448.1,357.1 448.1,367.3 444,367.3" fill="url(#pG)" /><polygon points="395.1,451.8 409.4,451.8 409.4,465.1 395.1,465.1" fill="url(#pG)" /><polygon points="399.2,454.9 406.3,454.9 406.3,462 399.2,462" fill="url(#pY)" /><polygon points="311.7,278.8 327,280.8 333.1,289 336.2,297.1 333.1,305.3 328,311.4 322.9,317.5 317.8,325.6 310.7,326.7 305.6,317.5 300.5,313.4 298.5,305.3 294.4,299.2 292.4,294.1 302.6,284.9" fill="url(#pR)" /><polygon points="348.4,312.4 361.6,311.4 367.8,314.4 372.9,319.5 367.8,325.6 361.6,330.7 356.6,330.7 350.4,325.6 343.3,321.6 342.3,316.5" fill="url(#pR)" /><polygon points="367.8,242.1 398.2,242.1 398.2,254.3 394.1,258.4 389.6,262.5 383,266.6 377.9,264.5 372.9,258.4 367.8,252.3" fill="url(#pR)" /><polygon points="489.9,323.6 498,323.6 501.1,331.8 505.2,356 505.2,356.1 485.8,356.1 482.7,346 482.7,337.9 486.8,333.8" fill="url(#pR)" /><polygon points="464.4,357.1 488.9,357.1 488.9,373.4 464.4,373.4" fill="url(#pR)" /><polygon points="281.2,379.5 293.4,379.5 298.5,384.6 298.5,392.7 293.4,398.9 290.3,406 284.2,406 278.1,392.7 278.1,379.5" fill="url(#pR)" /><polygon points="322.9,354.2 330.1,349.1 339.2,349.1 344.3,354.2 352.5,354 352.5,364.2 357.6,370.3 363.7,374.4 371.8,372.4 380,374.4 392,374.4 398.2,374.4 409.4,367.3 431.8,367.3 436.9,372.4 443,378.5 443,388.7 457.3,389.7 464.4,390.7 502.1,390.7 502.1,433.5 469.5,453.9 430.8,466.1 428.7,447.8 420.6,439.6 409.4,435.5 398.2,430.4 388,430.4 377.9,430.4 369.8,427.4 361.6,419.2 357.6,413.1 349.4,407 342.3,398.9 341.3,390.7 335.2,384.6 325,378.5 317.8,370.3 315.8,360.1 317.8,352" fill="url(#pR)" /><polygon points="324,356.1 341.3,355.1 346.4,360.1 347.4,368.3 353.5,374.4 363.7,378.5 371.8,384.6 380,389.7 392,391.7 398.2,392.7 409.4,390.7 418.6,384.6 425.7,378.5 431.8,382.6 431.8,388.7 428.7,396.8 428.7,402.9 420.6,407 420.6,413.1 416.5,419.2 398.2,422.3 388,423.3 382,421.3 373.9,417.2 367.8,411.1 361.6,405 353.5,402.9 347.4,394.8 342.3,384.6 337.2,378.5 329,374.4 324,368.3 321.9,362.2" fill="#000" /><clipPath id="c9k1"><polygon points="324,356.1 341.3,355.1 346.4,360.1 347.4,368.3 353.5,374.4 363.7,378.5 371.8,384.6 380,389.7 392,391.7 398.2,392.7 409.4,390.7 418.6,384.6 425.7,378.5 431.8,382.6 431.8,388.7 428.7,396.8 428.7,402.9 420.6,407 420.6,413.1 416.5,419.2 398.2,422.3 388,423.3 382,421.3 373.9,417.2 367.8,411.1 361.6,405 353.5,402.9 347.4,394.8 342.3,384.6 337.2,378.5 329,374.4 324,368.3 321.9,362.2" fill="#000" /></clipPath><g clip-path="url(#c9k1)"><polygon points="324,356.1 341.3,355.1 346.4,360.1 347.4,368.3 353.5,374.4 363.7,378.5 371.8,384.6 380,389.7 392,391.7 398.2,392.7 409.4,390.7 418.6,384.6 425.7,378.5 431.8,382.6 431.8,388.7 428.7,396.8 428.7,402.9 420.6,407 420.6,413.1 416.5,419.2 398.2,422.3 388,423.3 382,421.3 373.9,417.2 367.8,411.1 361.6,405 353.5,402.9 347.4,394.8 342.3,384.6 337.2,378.5 329,374.4 324,368.3 321.9,362.2" fill="none" stroke="url(#pK)" stroke-width="12"/></g><polygon points="468.5,401.9 477.6,402.9 485.8,409 493.9,413.1 469.5,437.6 447.1,453.9 438.9,451.8 434.9,441.6 428.7,433.5 418.6,426.4 414.5,420.3 420.6,411.1 428.7,402.9 431.8,411.1 436.9,416.2 447.1,415.2 457.3,411.1" fill="#000" /><clipPath id="c9k2"><polygon points="468.5,401.9 477.6,402.9 485.8,409 493.9,413.1 469.5,437.6 447.1,453.9 438.9,451.8 434.9,441.6 428.7,433.5 418.6,426.4 414.5,420.3 420.6,411.1 428.7,402.9 431.8,411.1 436.9,416.2 447.1,415.2 457.3,411.1" fill="#000" /></clipPath><g clip-path="url(#c9k2)"><polygon points="468.5,401.9 477.6,402.9 485.8,409 493.9,413.1 469.5,437.6 447.1,453.9 438.9,451.8 434.9,441.6 428.7,433.5 418.6,426.4 414.5,420.3 420.6,411.1 428.7,402.9 431.8,411.1 436.9,416.2 447.1,415.2 457.3,411.1" fill="none" stroke="url(#pK)" stroke-width="14"/></g><polygon points="373.3,244.1 387.1,244.1 387.1,253.3 383,256.4 377.9,255.4 373.3,250.3" fill="#000" /><clipPath id="c9k3"><polygon points="373.3,244.1 387.1,244.1 387.1,253.3 383,256.4 377.9,255.4 373.3,250.3" fill="#000" /></clipPath><g clip-path="url(#c9k3)"><polygon points="373.3,244.1 387.1,244.1 387.1,253.3 383,256.4 377.9,255.4 373.3,250.3" fill="none" stroke="url(#pK)" stroke-width="40"/></g></g><g fill="none" stroke="#0e8a94" stroke-width="1"><circle cx="389.5" cy="355.5" r="37.7"/><circle cx="389.5" cy="355.5" r="75.3"/><circle cx="389.5" cy="355.5" r="113.0"/><path d="M274.5 355.5H504.5M389.5 240.5V470.5" shape-rendering="crispEdges"/></g><clipPath id="c10"><rect x="562" y="331" width="4" height="49"/><rect x="566" y="317" width="4" height="77"/><rect x="570" y="307" width="4" height="97"/><rect x="574" y="299" width="4" height="113"/><rect x="578" y="293" width="4" height="125"/><rect x="582" y="287" width="4" height="137"/><rect x="586" y="283" width="4" height="145"/><rect x="590" y="277" width="4" height="157"/><rect x="594" y="273" width="4" height="165"/><rect x="598" y="271" width="4" height="169"/><rect x="602" y="267" width="4" height="177"/><rect x="606" y="263" width="4" height="185"/><rect x="610" y="261" width="4" height="189"/><rect x="614" y="259" width="4" height="193"/><rect x="618" y="257" width="4" height="197"/><rect x="622" y="255" width="4" height="201"/><rect x="626" y="253" width="4" height="205"/><rect x="630" y="251" width="4" height="209"/><rect x="634" y="249" width="4" height="213"/><rect x="638" y="247" width="4" height="217"/><rect x="642" y="247" width="4" height="217"/><rect x="646" y="245" width="4" height="221"/><rect x="650" y="245" width="4" height="221"/><rect x="654" y="245" width="4" height="221"/><rect x="658" y="243" width="4" height="225"/><rect x="662" y="243" width="4" height="225"/><rect x="666" y="243" width="4" height="225"/><rect x="670" y="243" width="4" height="225"/><rect x="674" y="243" width="4" height="225"/><rect x="678" y="243" width="4" height="225"/><rect x="682" y="243" width="4" height="225"/><rect x="686" y="243" width="4" height="225"/><rect x="690" y="245" width="4" height="221"/><rect x="694" y="245" width="4" height="221"/><rect x="698" y="245" width="4" height="221"/><rect x="702" y="247" width="4" height="217"/><rect x="706" y="249" width="4" height="213"/><rect x="710" y="249" width="4" height="213"/><rect x="714" y="251" width="4" height="209"/><rect x="718" y="253" width="4" height="205"/><rect x="722" y="255" width="4" height="201"/><rect x="726" y="257" width="4" height="197"/><rect x="730" y="259" width="4" height="193"/><rect x="734" y="261" width="4" height="189"/><rect x="738" y="265" width="4" height="181"/><rect x="742" y="267" width="4" height="177"/><rect x="746" y="271" width="4" height="169"/><rect x="750" y="275" width="4" height="161"/><rect x="754" y="279" width="4" height="153"/><rect x="758" y="283" width="4" height="145"/><rect x="762" y="289" width="4" height="133"/><rect x="766" y="295" width="4" height="121"/><rect x="770" y="301" width="4" height="109"/><rect x="774" y="309" width="4" height="93"/><rect x="778" y="319" width="4" height="73"/><rect x="782" y="335" width="4" height="41"/></clipPath><g clip-path="url(#c10)" shape-rendering="crispEdges"><rect x="559.2" y="241.2" width="228.6" height="228.6" fill="url(#pO)"/><polygon points="582.5,292 588.6,290 617.1,290 617.1,285.9 639.5,285.9 639.5,277.8 635.5,275.7 640.6,271.7 645.6,271.7 645.6,275.7 649.7,275.7 649.7,282.9 645.6,285.9 645.6,290 639.5,290 635.5,294.1 635.5,301.2 639.5,305.3 659.9,305.3 661.9,301.2 666,304.3 670.1,306.3 672,312.4 682.2,312.4 683.2,316.5 688.3,317.5 693.4,319.5 698.5,325.6 704.6,331.8 709.7,339.9 709.7,350.1 698.5,354.2 692.4,353 690.3,360.1 684.2,366.7 672,367.3 676,372.4 657.9,372.4 657.9,356.1 655.8,356 655.8,346 565.2,346 565.2,341.9 578.4,341.9 582.5,338.9 586.6,335.8 591.7,331.8 593.7,325.6 600.8,323.6 604.9,311.4 599.8,305.3 599.8,301.2 592.7,297.1 582.5,296.1" fill="url(#pG)" /><polygon points="683.2,272.7 693.4,269.6 704.6,263.5 727,263.5 731.1,257.4 753.5,272.7 773.9,299.2 786.1,333.8 798.3,356 798.3,352 798.3,413.1 753.5,474.2 673.6,478.3 673.6,463 691.4,463 693.4,453.9 693.4,447.8 702.6,437.6 704.6,425.3 715.8,419.2 720.9,413.1 728,407 728,386.6 750.4,382.6 750.4,352 750.4,356 750.4,341.9 747.4,333.8 741.3,327.7 733.1,323.6 725,323.6 725,319.5 733.1,314.4 739.2,310.4 746.4,309.3 746.4,303.2 751.5,297.1 751.5,277.8 726,276.7 720.9,282.9 715.8,288 715.8,294.1 709.7,294.1 704.6,288 704.6,281.8 693.4,281.8 693.4,276.7 683.2,276.7" fill="url(#pG)" /><polygon points="656.9,447.8 673.8,447.8 673.8,468.1 666,467.1 656.9,464.1" fill="url(#pG)" /><polygon points="669.1,347 683.2,346 681.2,358.1 672,358.1 669.1,358.1" fill="url(#pY)" /><polygon points="751.5,335.2 757.6,335.2 757.6,346 751.5,346" fill="url(#pY)" /><polygon points="639.5,247.2 646.7,243.1 676,241.1 676,255.4 670.1,255.4 667,259.4 661.9,258.4 659.9,255.4 639.5,255.4" fill="url(#pR)" /><polygon points="568.2,315.5 572.3,311.4 577.4,312.4 577.4,321.6 568.2,322.6 564.1,319.5" fill="url(#pR)" /><polygon points="678.1,294.1 683.2,290 688.3,294.1 693.4,295.1 693.4,301.2 688.3,305.3 682.2,304.3 678.1,299.2" fill="url(#pR)" /><polygon points="724,296.1 730.1,293 735.2,297.1 730.1,301.2 724,300.2" fill="url(#pR)" /><polygon points="704.6,315.5 708.7,315.5 708.7,323.6 704.6,323.6" fill="url(#pR)" /><polygon points="551.9,351 582.5,351 582.5,353 606.9,353 606.9,351 637.5,351 637.5,353 651.8,354 657.9,356.1 657.9,372.4 661.9,378.5 670.1,378.5 676,374.4 672,373.4 682.2,372.4 690.3,369.3 698.5,362.2 705.6,357.1 709.7,352 711.7,356 712.7,341.9 717.8,333.8 725,328.7 733.1,327.7 741.3,333.8 746.4,341.9 747.4,356 747.4,352 746.4,368.3 741.3,376.4 733.1,380.5 725,384.6 722.9,392.7 718.9,398.9 712.7,402.9 704.6,409 698.5,413.1 694.4,421.3 690.3,431.5 684.2,441.6 676.1,445.7 672,447.8 676,447.8 655.8,447.8 639.5,453.9 633.4,457.9 635.5,474.2 556,474.2 551.9,392.7" fill="url(#pR)" /><polygon points="554,357.1 650.7,357.1 652.8,372.4 655.8,380.5 666,384.6 672,384.6 680.1,382.6 692.4,376.4 702.6,368.3 710.7,360.1 714.8,352 715.8,356 717.8,344 724,335.8 731.1,331.8 737.2,336.9 742.3,346 743.3,356 742.3,352 741.3,364.2 735.2,372.4 727,378.5 720.9,382.6 715.8,392.7 704.6,399.9 693.4,407 684.2,413.1 682.2,421.3 678.1,433.5 672,439.6 676,438.6 649.7,438.6 637.5,440.6 623.2,446.7 615.1,451.8 606.9,474.2 554,474.2" fill="url(#pK)" /><polygon points="602.9,359.1 637.5,359.1 637.5,372.4 645.6,378.5 637.5,386.6 623.2,387.7 613,386.6 606.9,378.5 602.9,372.4" fill="#000" /><polygon points="564.1,359.1 578.4,359.1 578.4,370.3 564.1,370.3" fill="#000" /><polygon points="633.4,398.9 651.8,398.9 651.8,413.1 637.5,415.2 633.4,409" fill="#000" /><polygon points="576.4,411.1 596.7,411.1 602.9,419.2 606.9,433.5 617.1,443.7 606.9,453.9 576.4,433.5" fill="#000" /><polygon points="719.9,356 721.9,344 727,337.9 731.1,335.8 735.2,339.9 739.2,348.1 740.3,356 739.2,352 738.2,364.2 731.1,371.4 722.9,375.4 717.8,380.5 712.7,389.7 702.6,396.8 692.4,402.9 684.2,406 680.1,398.9 676.1,392.7 682.2,388.7 692.4,383.6 702.6,375.4 710.7,366.3 715.8,358.1 717.8,352" fill="#000" /><polygon points="565.2,380.5 593.7,378.5 593.7,386.6 588.6,392.7 582.5,400.9 577.4,407 568.2,407 560.1,392.7" fill="url(#pR)" /><polygon points="568.2,383.6 575.4,383.6 575.4,387.7 580.4,387.7 580.4,389.7 575.4,389.7 575.4,391.7 568.2,391.7" fill="url(#pO)" /><polygon points="608,402.9 617.1,397.8 626.3,402.9 626.3,415.2 621.2,422.3 612,421.3 608,413.1" fill="url(#pR)" /><polygon points="616.1,406 619.2,406 619.2,413.1 616.1,413.1" fill="url(#pO)" /><polygon points="656.9,392.7 661.9,387.7 676,386.6 680.1,398.9 682.2,413.1 680.1,433.5 672,437.6 670.1,421.3 666,421.3 659.9,415.2 656.9,407" fill="url(#pR)" /><polygon points="639.5,449.8 657.9,449.8 657.9,465.1 639.5,460" fill="url(#pO)" /></g><g fill="none" stroke="#0e8a94" stroke-width="1"><circle cx="673.5" cy="355.5" r="37.7"/><circle cx="673.5" cy="355.5" r="75.3"/><circle cx="673.5" cy="355.5" r="113.0"/><path d="M558.5 355.5H788.5M673.5 240.5V470.5" shape-rendering="crispEdges"/></g><text x="381.8" y="240" font-size="15" letter-spacing="-0.45" fill="#0e8a94" font-family="Liberation Sans">30°</text><text x="665.8" y="240" font-size="15" letter-spacing="-0.45" fill="#0e8a94" font-family="Liberation Sans">30°</text><text x="278.5" y="261.5" font-size="19.5" font-weight="bold" fill="#c00000" font-family="Liberation Sans">L</text><text x="771" y="261.5" font-size="19.5" font-weight="bold" fill="#12899a" font-family="Liberation Sans">R</text><text x="264" y="493" font-size="10" fill="#006a8a" font-family="Liberation Sans" letter-spacing="0.27">Color Defect Map</text><text x="440" y="493" font-size="10" fill="#006a8a" font-family="Liberation Sans" letter-spacing="0.56">Total Deviation</text><text x="548" y="493" font-size="10" fill="#006a8a" font-family="Liberation Sans" letter-spacing="0.27">Color Defect Map</text><text x="724" y="493" font-size="10" fill="#006a8a" font-family="Liberation Sans" letter-spacing="0.56">Total Deviation</text><circle cx="486" cy="452" r="19.5" fill="none" stroke="#808080"/><path d="M470 452H502" stroke="#00a000" stroke-width="2"/><path d="M468.500 452l4 -2.500v5zM503.500 452l-4 -2.500v5z" fill="#00a000"/><circle cx="770" cy="452" r="19.5" fill="none" stroke="#808080"/><path d="M761 452H779M768 452v6" stroke="#00a000" stroke-width="2" fill="none"/><path d="M759 452l4 -3v6zM781 452l-4 -3v6z" fill="#00a000"/></svg></div></div></div><div id="status" class="abs"><div class="abs" style="left:3px;top:5px;font-size:12.2px;letter-spacing:-0.38px;white-space:nowrap">Press F1 to get help</div><div class="sp" style="left:705px;width:36px"></div><div class="sp" style="left:742px;width:35px;font-size:12.2px;padding-left:2px;line-height:16px;letter-spacing:-0.39px">NUM</div><div class="sp" style="left:778px;width:33px"></div><svg class="abs" style="left:816px;top:6px" width="14" height="14"><path d="M2 13.500L13.500 2M6 13.500L13.500 6M10 13.500L13.500 10" stroke="#a0a0a0" stroke-width="1"/><path d="M3 13.500L13.500 3M7 13.500L13.500 7M11 13.500L13.500 11" stroke="#fff" stroke-width="1"/></svg></div><div id="bl" class="abs"></div><div id="br" class="abs"></div><div id="bb" class="abs"></div></body></html>
